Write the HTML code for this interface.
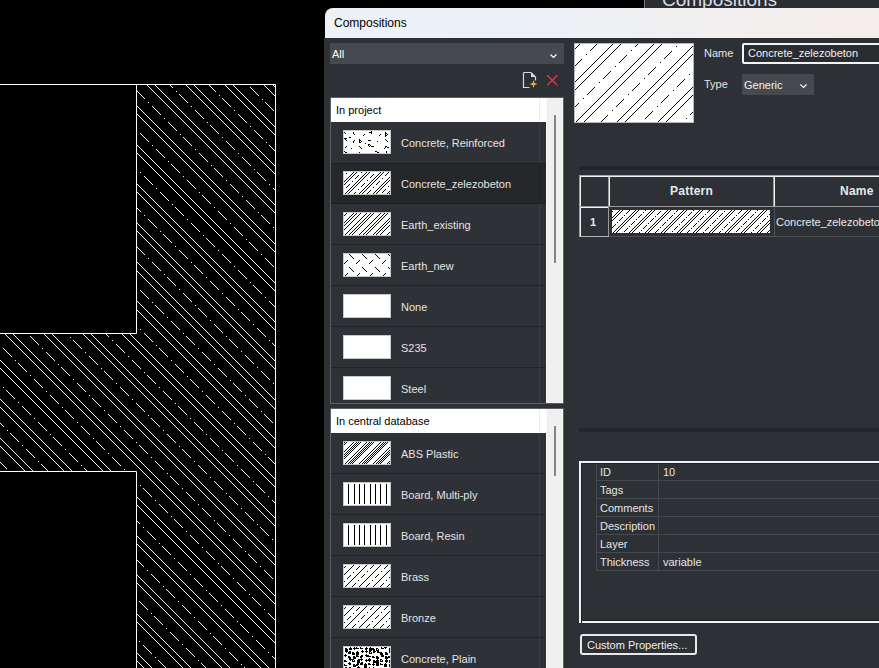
<!DOCTYPE html>
<html><head><meta charset="utf-8"><style>
*{box-sizing:border-box;margin:0;padding:0}
html,body{width:879px;height:668px;overflow:hidden;background:#000;font-family:"Liberation Sans",sans-serif;position:relative}
.a{position:absolute}
.t{line-height:1;white-space:nowrap}
svg{display:block}
</style></head><body>
<svg class="a" style="left:0;top:0" width="879" height="668">
<defs><clipPath id="cadclip"><path d="M137 85H275V668H137V471H0V334H137Z"/></clipPath></defs>
<g clip-path="url(#cadclip)" stroke="#fff" stroke-width="1" fill="none"><path d="M0 642L26 668M0 634L34 668M0 603L65 668M0 594L74 668M0 564L104 668M0 555L113 668M0 524L144 668M0 516L152 668M0 485L183 668M0 477L191 668M0 446L222 668M0 438L230 668M0 407L261 668M0 399L269 668M0 368L276 644M0 360L276 636M0 329L276 605M0 321L276 597M0 290L276 566M0 282L276 558M0 251L276 527M0 243L276 519M0 212L276 488M0 204L276 480M0 173L276 449M0 164L276 440M0 134L276 410M0 125L276 401M0 94L276 370M0 86L276 362M29 84L276 331M37 84L276 323M68 84L276 292M76 84L276 284M107 84L276 253M115 84L276 245M146 84L276 214M154 84L276 206M185 84L276 175M193 84L276 167M224 84L276 136M232 84L276 128M263 84L276 97M272 84L276 88M-14 644l9 9M-2 656l1 1M2 660l9 9M14 672l1 1M17 675l9 9M29 687l1 1M-18 601l9 9M-6 613l1 1M-2 617l9 9M10 629l1 1M14 633l9 9M26 645l1 1M29 648l9 9M41 660l1 1M45 664l9 9M57 676l1 1M60 679l9 9M72 691l1 1M-6 574l9 9M6 586l1 1M10 590l9 9M22 602l1 1M26 606l9 9M38 618l1 1M41 621l9 9M53 633l1 1M57 637l9 9M69 649l1 1M72 652l9 9M84 664l1 1M88 668l9 9M100 680l1 1M-10 531l9 9M2 543l1 1M6 547l9 9M18 559l1 1M22 563l9 9M34 575l1 1M37 578l9 9M49 590l1 1M53 594l9 9M65 606l1 1M68 609l9 9M80 621l1 1M84 625l9 9M96 637l1 1M100 641l9 9M112 653l1 1M115 656l9 9M127 668l1 1M131 672l9 9M143 684l1 1M-13 489l9 9M-1 501l1 1M2 504l9 9M14 516l1 1M18 520l9 9M30 532l1 1M33 535l9 9M45 547l1 1M49 551l9 9M61 563l1 1M65 567l9 9M77 579l1 1M80 582l9 9M92 594l1 1M96 598l9 9M108 610l1 1M111 613l9 9M123 625l1 1M127 629l9 9M139 641l1 1M143 645l9 9M155 657l1 1M158 660l9 9M170 672l1 1M174 676l9 9M186 688l1 1M-17 445l9 9M-5 457l1 1M-2 460l9 9M10 472l1 1M14 476l9 9M26 488l1 1M30 492l9 9M42 504l1 1M45 507l9 9M57 519l1 1M61 523l9 9M73 535l1 1M76 538l9 9M88 550l1 1M92 554l9 9M104 566l1 1M108 570l9 9M120 582l1 1M123 585l9 9M135 597l1 1M139 601l9 9M151 613l1 1M154 616l9 9M166 628l1 1M170 632l9 9M182 644l1 1M186 648l9 9M198 660l1 1M201 663l9 9M213 675l1 1M217 679l9 9M229 691l1 1M-5 418l9 9M7 430l1 1M10 433l9 9M22 445l1 1M26 449l9 9M38 461l1 1M41 464l9 9M53 476l1 1M57 480l9 9M69 492l1 1M73 496l9 9M85 508l1 1M88 511l9 9M100 523l1 1M104 527l9 9M116 539l1 1M120 543l9 9M132 555l1 1M135 558l9 9M147 570l1 1M151 574l9 9M163 586l1 1M166 589l9 9M178 601l1 1M182 605l9 9M194 617l1 1M198 621l9 9M210 633l1 1M213 636l9 9M225 648l1 1M229 652l9 9M241 664l1 1M244 667l9 9M256 679l1 1M-9 375l9 9M3 387l1 1M6 390l9 9M18 402l1 1M22 406l9 9M34 418l1 1M38 422l9 9M50 434l1 1M53 437l9 9M65 449l1 1M69 453l9 9M81 465l1 1M84 468l9 9M96 480l1 1M100 484l9 9M112 496l1 1M116 500l9 9M128 512l1 1M131 515l9 9M143 527l1 1M147 531l9 9M159 543l1 1M162 546l9 9M174 558l1 1M178 562l9 9M190 574l1 1M194 578l9 9M206 590l1 1M209 593l9 9M221 605l1 1M225 609l9 9M237 621l1 1M240 624l9 9M252 636l1 1M256 640l9 9M268 652l1 1M272 656l9 9M284 668l1 1M287 671l9 9M299 683l1 1M-13 332l9 9M-1 344l1 1M3 348l9 9M15 360l1 1M18 363l9 9M30 375l1 1M34 379l9 9M46 391l1 1M50 395l9 9M62 407l1 1M65 410l9 9M77 422l1 1M81 426l9 9M93 438l1 1M96 441l9 9M108 453l1 1M112 457l9 9M124 469l1 1M128 473l9 9M140 485l1 1M143 488l9 9M155 500l1 1M159 504l9 9M171 516l1 1M174 519l9 9M186 531l1 1M190 535l9 9M202 547l1 1M206 551l9 9M218 563l1 1M221 566l9 9M233 578l1 1M237 582l9 9M249 594l1 1M252 597l9 9M264 609l1 1M268 613l9 9M280 625l1 1M284 629l9 9M296 641l1 1M-17 289l9 9M-5 301l1 1M-1 305l9 9M11 317l1 1M14 320l9 9M26 332l1 1M30 336l9 9M42 348l1 1M46 352l9 9M58 364l1 1M61 367l9 9M73 379l1 1M77 383l9 9M89 395l1 1M92 398l9 9M104 410l1 1M108 414l9 9M120 426l1 1M124 430l9 9M136 442l1 1M139 445l9 9M151 457l1 1M155 461l9 9M167 473l1 1M170 476l9 9M182 488l1 1M186 492l9 9M198 504l1 1M202 508l9 9M214 520l1 1M217 523l9 9M229 535l1 1M233 539l9 9M245 551l1 1M248 554l9 9M260 566l1 1M264 570l9 9M276 582l1 1M280 586l9 9M292 598l1 1M-20 247l9 9M-8 259l1 1M-5 262l9 9M7 274l1 1M11 278l9 9M23 290l1 1M26 293l9 9M38 305l1 1M42 309l9 9M54 321l1 1M58 325l9 9M70 337l1 1M73 340l9 9M85 352l1 1M89 356l9 9M101 368l1 1M104 371l9 9M116 383l1 1M120 387l9 9M132 399l1 1M136 403l9 9M148 415l1 1M151 418l9 9M163 430l1 1M167 434l9 9M179 446l1 1M182 449l9 9M194 461l1 1M198 465l9 9M210 477l1 1M214 481l9 9M226 493l1 1M229 496l9 9M241 508l1 1M245 512l9 9M257 524l1 1M260 527l9 9M272 539l1 1M276 543l9 9M288 555l1 1M-9 219l9 9M3 231l1 1M7 235l9 9M19 247l1 1M22 250l9 9M34 262l1 1M38 266l9 9M50 278l1 1M54 282l9 9M66 294l1 1M69 297l9 9M81 309l1 1M85 313l9 9M97 325l1 1M100 328l9 9M112 340l1 1M116 344l9 9M128 356l1 1M132 360l9 9M144 372l1 1M147 375l9 9M159 387l1 1M163 391l9 9M175 403l1 1M178 406l9 9M190 418l1 1M194 422l9 9M206 434l1 1M210 438l9 9M222 450l1 1M225 453l9 9M237 465l1 1M241 469l9 9M253 481l1 1M256 484l9 9M268 496l1 1M272 500l9 9M284 512l1 1M288 516l9 9M300 528l1 1M-12 177l9 9M0 189l1 1M3 192l9 9M15 204l1 1M19 208l9 9M31 220l1 1M34 223l9 9M46 235l1 1M50 239l9 9M62 251l1 1M66 255l9 9M78 267l1 1M81 270l9 9M93 282l1 1M97 286l9 9M109 298l1 1M112 301l9 9M124 313l1 1M128 317l9 9M140 329l1 1M144 333l9 9M156 345l1 1M159 348l9 9M171 360l1 1M175 364l9 9M187 376l1 1M190 379l9 9M202 391l1 1M206 395l9 9M218 407l1 1M222 411l9 9M234 423l1 1M237 426l9 9M249 438l1 1M253 442l9 9M265 454l1 1M268 457l9 9M280 469l1 1M284 473l9 9M296 485l1 1M-16 134l9 9M-4 146l1 1M-1 149l9 9M11 161l1 1M15 165l9 9M27 177l1 1M30 180l9 9M42 192l1 1M46 196l9 9M58 208l1 1M62 212l9 9M74 224l1 1M77 227l9 9M89 239l1 1M93 243l9 9M105 255l1 1M108 258l9 9M120 270l1 1M124 274l9 9M136 286l1 1M140 290l9 9M152 302l1 1M155 305l9 9M167 317l1 1M171 321l9 9M183 333l1 1M186 336l9 9M198 348l1 1M202 352l9 9M214 364l1 1M218 368l9 9M230 380l1 1M233 383l9 9M245 395l1 1M249 399l9 9M261 411l1 1M264 414l9 9M276 426l1 1M280 430l9 9M292 442l1 1M-20 90l9 9M-8 102l1 1M-4 106l9 9M8 118l1 1M11 121l9 9M23 133l1 1M27 137l9 9M39 149l1 1M42 152l9 9M54 164l1 1M58 168l9 9M70 180l1 1M74 184l9 9M86 196l1 1M89 199l9 9M101 211l1 1M105 215l9 9M117 227l1 1M120 230l9 9M132 242l1 1M136 246l9 9M148 258l1 1M152 262l9 9M164 274l1 1M167 277l9 9M179 289l1 1M183 293l9 9M195 305l1 1M198 308l9 9M210 320l1 1M214 324l9 9M226 336l1 1M229 339l9 9M241 351l1 1M245 355l9 9M257 367l1 1M261 371l9 9M273 383l1 1M276 386l9 9M288 398l1 1M-8 63l9 9M4 75l1 1M7 78l9 9M19 90l1 1M23 94l9 9M35 106l1 1M38 109l9 9M50 121l1 1M54 125l9 9M66 137l1 1M70 141l9 9M82 153l1 1M85 156l9 9M97 168l1 1M101 172l9 9M113 184l1 1M116 187l9 9M128 199l1 1M132 203l9 9M144 215l1 1M148 219l9 9M160 231l1 1M163 234l9 9M175 246l1 1M179 250l9 9M191 262l1 1M194 265l9 9M206 277l1 1M210 281l9 9M222 293l1 1M226 297l9 9M238 309l1 1M241 312l9 9M253 324l1 1M257 328l9 9M269 340l1 1M272 343l9 9M284 355l1 1M288 359l9 9M300 371l1 1M35 67l9 9M47 79l1 1M50 82l9 9M62 94l1 1M66 98l9 9M78 110l1 1M82 114l9 9M94 126l1 1M97 129l9 9M109 141l1 1M113 145l9 9M125 157l1 1M128 160l9 9M140 172l1 1M144 176l9 9M156 188l1 1M160 192l9 9M172 204l1 1M175 207l9 9M187 219l1 1M191 223l9 9M203 235l1 1M206 238l9 9M218 250l1 1M222 254l9 9M234 266l1 1M238 270l9 9M250 282l1 1M253 285l9 9M265 297l1 1M269 301l9 9M281 313l1 1M284 316l9 9M296 328l1 1M78 71l9 9M90 83l1 1M93 86l9 9M105 98l1 1M109 102l9 9M121 114l1 1M124 117l9 9M136 129l1 1M140 133l9 9M152 145l1 1M156 149l9 9M168 161l1 1M171 164l9 9M183 176l1 1M187 180l9 9M199 192l1 1M202 195l9 9M214 207l1 1M218 211l9 9M230 223l1 1M234 227l9 9M246 239l1 1M249 242l9 9M261 254l1 1M265 258l9 9M277 270l1 1M280 273l9 9M292 285l1 1M121 75l9 9M133 87l1 1M136 90l9 9M148 102l1 1M152 106l9 9M164 118l1 1M168 122l9 9M180 134l1 1M183 137l9 9M195 149l1 1M199 153l9 9M211 165l1 1M214 168l9 9M226 180l1 1M230 184l9 9M242 196l1 1M246 200l9 9M258 212l1 1M261 215l9 9M273 227l1 1M277 231l9 9M289 243l1 1M148 63l9 9M160 75l1 1M164 79l9 9M176 91l1 1M179 94l9 9M191 106l1 1M195 110l9 9M207 122l1 1M210 125l9 9M222 137l1 1M226 141l9 9M238 153l1 1M242 157l9 9M254 169l1 1M257 172l9 9M269 184l1 1M273 188l9 9M285 200l1 1M288 203l9 9M300 215l1 1M191 67l9 9M203 79l1 1M207 83l9 9M219 95l1 1M222 98l9 9M234 110l1 1M238 114l9 9M250 126l1 1M254 130l9 9M266 142l1 1M269 145l9 9M281 157l1 1M285 161l9 9M297 173l1 1M234 71l9 9M246 83l1 1M250 87l9 9M262 99l1 1M265 102l9 9M277 114l1 1M281 118l9 9M293 130l1 1M262 60l9 9M274 72l1 1M277 75l9 9M289 87l1 1"/></g>
<path d="M0 84.5H275.5V668M136.5 84V333.5H0M0 471.5H136.5V668" stroke="#fff" stroke-width="1" fill="none"/>
</svg><div class="a" style="left:644px;top:0;width:235px;height:8px;background:#2a2d31;border-left:1px solid #77797c;overflow:hidden"><div class="a t" style="left:17px;top:-10.1px;font-size:19px;color:#d8dde3">Compositions</div></div><div class="a" style="left:325px;top:8px;width:570px;height:680px;background:#2d3035;border-top-left-radius:8px;overflow:hidden"><div class="a" style="left:0;top:0;width:570px;height:30px;background:linear-gradient(90deg,#eef2f7 0%,#ebf1f8 30%,#f1f0f1 62%,#f4eeeb 100%)"></div></div><div class="a t" style="left:334px;top:16.84px;font-size:12px;color:#000;font-weight:normal;">Compositions</div><div class="a" style="left:324px;top:38px;width:1px;height:630px;background:#2f3032"></div><div class="a" style="left:330px;top:43px;width:234px;height:21px;background:#46494e"></div><div class="a t" style="left:332px;top:48.69px;font-size:11px;color:#ffffff;font-weight:normal;">All</div><svg class="a" style="left:548px;top:52px" width="12" height="8"><path d="M2.5 2.5L5.5 5.5L8.5 2.5" stroke="#fff" stroke-width="1.15" fill="none"/></svg><svg class="a" style="left:520px;top:70px" width="20" height="20"><path d="M3.5 2.5H11L15.5 7V10.5M3.5 2.5V17.5H9.5" stroke="#d6dae2" stroke-width="1.2" fill="none"/><path d="M11 2.5V7H15.5Z" fill="#d6dae2"/><path d="M13.5 10L14.5 13L17.5 14L14.5 15L13.5 18L12.5 15L9.5 14L12.5 13Z" fill="#f0b030"/></svg><svg class="a" style="left:544px;top:72px" width="16" height="16"><path d="M3.2 3.2L13.4 13.4M13.4 3.2L3.2 13.4" stroke="#e5404e" stroke-width="1.3" fill="none"/></svg><div class="a" style="left:330px;top:97px;width:234px;height:307px;border:1px solid #5c5f63;background:#2e3136;overflow:hidden"><div class="a" style="left:0;top:0;width:216px;height:24px;background:#fff"></div><div class="a" style="left:208px;top:0;width:1px;height:24px;background:#ececec"></div><div class="a t" style="left:5px;top:7px;font-size:11px;color:#000">In project</div><div class="a" style="left:0;top:24px;width:215px;height:40px;background:#2e3136"></div><div class="a" style="left:0;top:64px;width:215px;height:1px;background:#222428"></div><div class="a" style="left:208px;top:24px;width:1px;height:40px;background:#34404b"></div><svg class="a" style="left:12px;top:32px" width="48" height="24"><rect x="0.5" y="0.5" width="47" height="23" fill="#fff" stroke="#c8c8c8"/><path d="M28 1h1v1h-1zM1 2h1v1h-1zM10 2h1v1h-1zM26 2h3v1h-3zM42 2h1v1h-1zM2 3h1v1h-1zM10 3h1v1h-1zM28 3h1v1h-1zM42 3h2v1h-2zM11 4h1v1h-1zM21 4h1v1h-1zM37 4h1v1h-1zM42 4h1v1h-1zM44 4h1v1h-1zM20 5h1v1h-1zM36 5h1v1h-1zM42 5h2v1h-2zM42 6h1v1h-1zM6 7h2v1h-2zM1 8h3v1h-3zM2 9h1v1h-1zM16 9h1v1h-1zM42 9h1v1h-1zM3 10h1v1h-1zM11 10h1v1h-1zM16 10h2v1h-2zM25 10h3v1h-3zM43 10h1v1h-1zM10 11h1v1h-1zM16 11h1v1h-1zM18 11h1v1h-1zM34 11h1v1h-1zM44 11h1v1h-1zM10 12h1v1h-1zM16 12h2v1h-2zM22 13h1v1h-1zM25 14h2v1h-2zM25 15h1v1h-1zM27 15h1v1h-1zM3 16h1v1h-1zM16 16h1v1h-1zM26 16h1v1h-1zM28 16h3v1h-3zM42 16h2v1h-2zM2 17h1v1h-1zM17 17h1v1h-1zM42 17h1v1h-1zM44 17h2v1h-2zM8 18h1v1h-1zM18 18h1v1h-1zM41 18h1v1h-1zM1 21h1v1h-1zM32 21h2v1h-2zM43 21h1v1h-1zM2 22h2v1h-2zM16 22h1v1h-1zM34 22h2v1h-2zM43 22h1v1h-1z" fill="#000"/></svg><div class="a t" style="left:70px;top:39.69px;font-size:11px;color:#e4e4e4">Concrete, Reinforced</div><div class="a" style="left:0;top:65px;width:215px;height:40px;background:#25272b"></div><div class="a" style="left:0;top:105px;width:215px;height:1px;background:#222428"></div><div class="a" style="left:0;top:64px;width:215px;height:1px;background:#2e3136"></div><div class="a" style="left:0;top:65px;width:215px;height:1px;background:#1d1f22"></div><div class="a" style="left:0;top:105px;width:215px;height:1px;background:#1d1f22"></div><div class="a" style="left:208px;top:65px;width:1px;height:40px;background:#1c232b"></div><svg class="a" style="left:12px;top:73px" width="48" height="24"><rect x="0.5" y="0.5" width="47" height="23" fill="#fff" stroke="#c8c8c8"/><path d="M10 1h1v1h-1zM13 1h1v1h-1zM18 1h1v1h-1zM23 1h1v1h-1zM26 1h1v1h-1zM37 1h1v1h-1zM40 1h1v1h-1zM45 1h1v1h-1zM3 2h1v1h-1zM9 2h1v1h-1zM12 2h1v1h-1zM22 2h1v1h-1zM25 2h1v1h-1zM36 2h1v1h-1zM39 2h1v1h-1zM44 2h1v1h-1zM8 3h1v1h-1zM11 3h1v1h-1zM21 3h1v1h-1zM24 3h1v1h-1zM30 3h1v1h-1zM35 3h1v1h-1zM38 3h1v1h-1zM43 3h1v1h-1zM7 4h1v1h-1zM10 4h1v1h-1zM15 4h1v1h-1zM20 4h1v1h-1zM23 4h1v1h-1zM29 4h1v1h-1zM34 4h1v1h-1zM37 4h1v1h-1zM42 4h1v1h-1zM6 5h1v1h-1zM9 5h1v1h-1zM14 5h1v1h-1zM19 5h1v1h-1zM22 5h1v1h-1zM28 5h1v1h-1zM33 5h1v1h-1zM36 5h1v1h-1zM5 6h1v1h-1zM8 6h1v1h-1zM13 6h1v1h-1zM18 6h1v1h-1zM21 6h1v1h-1zM27 6h1v1h-1zM32 6h1v1h-1zM35 6h1v1h-1zM46 6h1v1h-1zM4 7h1v1h-1zM7 7h1v1h-1zM12 7h1v1h-1zM17 7h1v1h-1zM20 7h1v1h-1zM31 7h1v1h-1zM34 7h1v1h-1zM39 7h1v1h-1zM45 7h1v1h-1zM3 8h1v1h-1zM6 8h1v1h-1zM16 8h1v1h-1zM19 8h1v1h-1zM30 8h1v1h-1zM33 8h1v1h-1zM44 8h1v1h-1zM2 9h1v1h-1zM5 9h1v1h-1zM15 9h1v1h-1zM18 9h1v1h-1zM24 9h1v1h-1zM29 9h1v1h-1zM32 9h1v1h-1zM43 9h1v1h-1zM46 9h1v1h-1zM1 10h1v1h-1zM4 10h1v1h-1zM9 10h1v1h-1zM14 10h1v1h-1zM17 10h1v1h-1zM28 10h1v1h-1zM31 10h1v1h-1zM36 10h1v1h-1zM42 10h1v1h-1zM45 10h1v1h-1zM3 11h1v1h-1zM13 11h1v1h-1zM16 11h1v1h-1zM27 11h1v1h-1zM30 11h1v1h-1zM35 11h1v1h-1zM41 11h1v1h-1zM44 11h1v1h-1zM2 12h1v1h-1zM12 12h1v1h-1zM15 12h1v1h-1zM21 12h1v1h-1zM26 12h1v1h-1zM29 12h1v1h-1zM34 12h1v1h-1zM40 12h1v1h-1zM43 12h1v1h-1zM1 13h1v1h-1zM6 13h1v1h-1zM11 13h1v1h-1zM14 13h1v1h-1zM20 13h1v1h-1zM25 13h1v1h-1zM28 13h1v1h-1zM33 13h1v1h-1zM39 13h1v1h-1zM42 13h1v1h-1zM5 14h1v1h-1zM10 14h1v1h-1zM13 14h1v1h-1zM19 14h1v1h-1zM24 14h1v1h-1zM27 14h1v1h-1zM38 14h1v1h-1zM41 14h1v1h-1zM4 15h1v1h-1zM9 15h1v1h-1zM12 15h1v1h-1zM18 15h1v1h-1zM23 15h1v1h-1zM26 15h1v1h-1zM37 15h1v1h-1zM40 15h1v1h-1zM45 15h1v1h-1zM3 16h1v1h-1zM8 16h1v1h-1zM11 16h1v1h-1zM22 16h1v1h-1zM25 16h1v1h-1zM30 16h1v1h-1zM36 16h1v1h-1zM39 16h1v1h-1zM7 17h1v1h-1zM10 17h1v1h-1zM21 17h1v1h-1zM24 17h1v1h-1zM35 17h1v1h-1zM38 17h1v1h-1zM6 18h1v1h-1zM9 18h1v1h-1zM15 18h1v1h-1zM20 18h1v1h-1zM23 18h1v1h-1zM34 18h1v1h-1zM37 18h1v1h-1zM42 18h1v1h-1zM5 19h1v1h-1zM8 19h1v1h-1zM19 19h1v1h-1zM22 19h1v1h-1zM27 19h1v1h-1zM33 19h1v1h-1zM36 19h1v1h-1zM41 19h1v1h-1zM4 20h1v1h-1zM7 20h1v1h-1zM18 20h1v1h-1zM21 20h1v1h-1zM26 20h1v1h-1zM32 20h1v1h-1zM35 20h1v1h-1zM40 20h1v1h-1zM46 20h1v1h-1zM3 21h1v1h-1zM6 21h1v1h-1zM12 21h1v1h-1zM17 21h1v1h-1zM20 21h1v1h-1zM25 21h1v1h-1zM31 21h1v1h-1zM34 21h1v1h-1zM39 21h1v1h-1zM45 21h1v1h-1zM2 22h1v1h-1zM5 22h1v1h-1zM11 22h1v1h-1zM16 22h1v1h-1zM19 22h1v1h-1zM24 22h1v1h-1zM30 22h1v1h-1zM33 22h1v1h-1zM44 22h1v1h-1zM46 22h1v1h-1z" fill="#000"/></svg><div class="a t" style="left:70px;top:80.69px;font-size:11px;color:#e4e4e4">Concrete_zelezobeton</div><div class="a" style="left:0;top:106px;width:215px;height:40px;background:#2e3136"></div><div class="a" style="left:0;top:146px;width:215px;height:1px;background:#222428"></div><div class="a" style="left:208px;top:106px;width:1px;height:40px;background:#34404b"></div><svg class="a" style="left:12px;top:114px" width="48" height="24"><rect x="0.5" y="0.5" width="47" height="23" fill="#fff" stroke="#c8c8c8"/><path d="M3 1h1v1h-1zM10 1h1v1h-1zM13 1h1v1h-1zM17 1h1v1h-1zM23 1h1v1h-1zM27 1h1v1h-1zM30 1h1v1h-1zM37 1h1v1h-1zM41 1h1v1h-1zM44 1h1v1h-1zM2 2h1v1h-1zM9 2h1v1h-1zM12 2h1v1h-1zM16 2h1v1h-1zM22 2h1v1h-1zM26 2h1v1h-1zM29 2h1v1h-1zM36 2h1v1h-1zM40 2h1v1h-1zM43 2h1v1h-1zM1 3h1v1h-1zM8 3h1v1h-1zM11 3h1v1h-1zM15 3h1v1h-1zM21 3h1v1h-1zM25 3h1v1h-1zM28 3h1v1h-1zM35 3h1v1h-1zM39 3h1v1h-1zM42 3h1v1h-1zM7 4h1v1h-1zM10 4h1v1h-1zM14 4h1v1h-1zM20 4h1v1h-1zM24 4h1v1h-1zM27 4h1v1h-1zM34 4h1v1h-1zM38 4h1v1h-1zM41 4h1v1h-1zM6 5h1v1h-1zM9 5h1v1h-1zM13 5h1v1h-1zM19 5h1v1h-1zM23 5h1v1h-1zM26 5h1v1h-1zM33 5h1v1h-1zM37 5h1v1h-1zM40 5h1v1h-1zM5 6h1v1h-1zM8 6h1v1h-1zM12 6h1v1h-1zM18 6h1v1h-1zM22 6h1v1h-1zM25 6h1v1h-1zM32 6h1v1h-1zM36 6h1v1h-1zM39 6h1v1h-1zM46 6h1v1h-1zM4 7h1v1h-1zM7 7h1v1h-1zM11 7h1v1h-1zM17 7h1v1h-1zM21 7h1v1h-1zM24 7h1v1h-1zM31 7h1v1h-1zM35 7h1v1h-1zM38 7h1v1h-1zM45 7h1v1h-1zM3 8h1v1h-1zM6 8h1v1h-1zM10 8h1v1h-1zM16 8h1v1h-1zM20 8h1v1h-1zM23 8h1v1h-1zM30 8h1v1h-1zM34 8h1v1h-1zM37 8h1v1h-1zM44 8h1v1h-1zM2 9h1v1h-1zM5 9h1v1h-1zM9 9h1v1h-1zM15 9h1v1h-1zM19 9h1v1h-1zM22 9h1v1h-1zM29 9h1v1h-1zM33 9h1v1h-1zM36 9h1v1h-1zM43 9h1v1h-1zM46 9h1v1h-1zM1 10h1v1h-1zM4 10h1v1h-1zM8 10h1v1h-1zM14 10h1v1h-1zM18 10h1v1h-1zM21 10h1v1h-1zM28 10h1v1h-1zM32 10h1v1h-1zM35 10h1v1h-1zM42 10h1v1h-1zM45 10h1v1h-1zM3 11h1v1h-1zM7 11h1v1h-1zM13 11h1v1h-1zM17 11h1v1h-1zM20 11h1v1h-1zM27 11h1v1h-1zM31 11h1v1h-1zM34 11h1v1h-1zM41 11h1v1h-1zM44 11h1v1h-1zM2 12h1v1h-1zM6 12h1v1h-1zM12 12h1v1h-1zM16 12h1v1h-1zM19 12h1v1h-1zM26 12h1v1h-1zM30 12h1v1h-1zM33 12h1v1h-1zM40 12h1v1h-1zM43 12h1v1h-1zM1 13h1v1h-1zM5 13h1v1h-1zM11 13h1v1h-1zM15 13h1v1h-1zM18 13h1v1h-1zM25 13h1v1h-1zM29 13h1v1h-1zM32 13h1v1h-1zM39 13h1v1h-1zM42 13h1v1h-1zM46 13h1v1h-1zM4 14h1v1h-1zM10 14h1v1h-1zM14 14h1v1h-1zM17 14h1v1h-1zM24 14h1v1h-1zM28 14h1v1h-1zM31 14h1v1h-1zM38 14h1v1h-1zM41 14h1v1h-1zM45 14h1v1h-1zM3 15h1v1h-1zM9 15h1v1h-1zM13 15h1v1h-1zM16 15h1v1h-1zM23 15h1v1h-1zM27 15h1v1h-1zM30 15h1v1h-1zM37 15h1v1h-1zM40 15h1v1h-1zM44 15h1v1h-1zM2 16h1v1h-1zM8 16h1v1h-1zM12 16h1v1h-1zM15 16h1v1h-1zM22 16h1v1h-1zM26 16h1v1h-1zM29 16h1v1h-1zM36 16h1v1h-1zM39 16h1v1h-1zM43 16h1v1h-1zM1 17h1v1h-1zM7 17h1v1h-1zM11 17h1v1h-1zM14 17h1v1h-1zM21 17h1v1h-1zM25 17h1v1h-1zM28 17h1v1h-1zM35 17h1v1h-1zM38 17h1v1h-1zM42 17h1v1h-1zM6 18h1v1h-1zM10 18h1v1h-1zM13 18h1v1h-1zM20 18h1v1h-1zM24 18h1v1h-1zM27 18h1v1h-1zM34 18h1v1h-1zM37 18h1v1h-1zM41 18h1v1h-1zM5 19h1v1h-1zM9 19h1v1h-1zM12 19h1v1h-1zM19 19h1v1h-1zM23 19h1v1h-1zM26 19h1v1h-1zM33 19h1v1h-1zM36 19h1v1h-1zM40 19h1v1h-1zM4 20h1v1h-1zM8 20h1v1h-1zM11 20h1v1h-1zM18 20h1v1h-1zM22 20h1v1h-1zM25 20h1v1h-1zM32 20h1v1h-1zM35 20h1v1h-1zM39 20h1v1h-1zM46 20h1v1h-1zM3 21h1v1h-1zM7 21h1v1h-1zM10 21h1v1h-1zM17 21h1v1h-1zM21 21h1v1h-1zM24 21h1v1h-1zM31 21h1v1h-1zM34 21h1v1h-1zM38 21h1v1h-1zM45 21h1v1h-1zM2 22h1v1h-1zM6 22h1v1h-1zM9 22h1v1h-1zM16 22h1v1h-1zM20 22h1v1h-1zM23 22h1v1h-1zM30 22h1v1h-1zM33 22h1v1h-1zM37 22h1v1h-1zM44 22h1v1h-1z" fill="#000"/></svg><div class="a t" style="left:70px;top:121.69px;font-size:11px;color:#e4e4e4">Earth_existing</div><div class="a" style="left:0;top:147px;width:215px;height:40px;background:#2e3136"></div><div class="a" style="left:0;top:187px;width:215px;height:1px;background:#222428"></div><div class="a" style="left:208px;top:147px;width:1px;height:40px;background:#34404b"></div><svg class="a" style="left:12px;top:155px" width="48" height="24"><rect x="0.5" y="0.5" width="47" height="23" fill="#fff" stroke="#c8c8c8"/><path d="M6 1h1v1h-1zM19 1h1v1h-1zM32 1h1v1h-1zM45 1h1v1h-1zM7 2h1v1h-1zM20 2h1v1h-1zM33 2h1v1h-1zM46 2h1v1h-1zM8 3h1v1h-1zM21 3h1v1h-1zM34 3h1v1h-1zM9 4h1v1h-1zM22 4h1v1h-1zM35 4h1v1h-1zM10 5h1v1h-1zM23 5h1v1h-1zM36 5h1v1h-1zM4 7h1v1h-1zM16 7h1v1h-1zM29 7h1v1h-1zM42 7h1v1h-1zM3 8h1v1h-1zM15 8h1v1h-1zM28 8h1v1h-1zM41 8h1v1h-1zM2 9h1v1h-1zM14 9h1v1h-1zM27 9h1v1h-1zM40 9h1v1h-1zM1 10h1v1h-1zM13 10h1v1h-1zM26 10h1v1h-1zM39 10h1v1h-1zM6 14h1v1h-1zM19 14h1v1h-1zM32 14h1v1h-1zM45 14h1v1h-1zM7 15h1v1h-1zM20 15h1v1h-1zM33 15h1v1h-1zM46 15h1v1h-1zM8 16h1v1h-1zM21 16h1v1h-1zM34 16h1v1h-1zM9 17h1v1h-1zM22 17h1v1h-1zM35 17h1v1h-1zM10 18h1v1h-1zM23 18h1v1h-1zM36 18h1v1h-1zM4 20h1v1h-1zM16 20h1v1h-1zM29 20h1v1h-1zM42 20h1v1h-1zM3 21h1v1h-1zM15 21h1v1h-1zM28 21h1v1h-1zM41 21h1v1h-1zM2 22h1v1h-1zM14 22h1v1h-1zM27 22h1v1h-1zM40 22h1v1h-1z" fill="#000"/></svg><div class="a t" style="left:70px;top:162.69px;font-size:11px;color:#e4e4e4">Earth_new</div><div class="a" style="left:0;top:188px;width:215px;height:40px;background:#2e3136"></div><div class="a" style="left:0;top:228px;width:215px;height:1px;background:#222428"></div><div class="a" style="left:208px;top:188px;width:1px;height:40px;background:#34404b"></div><svg class="a" style="left:12px;top:196px" width="48" height="24"><rect x="0.5" y="0.5" width="47" height="23" fill="#fff" stroke="#c8c8c8"/></svg><div class="a t" style="left:70px;top:203.69px;font-size:11px;color:#e4e4e4">None</div><div class="a" style="left:0;top:229px;width:215px;height:40px;background:#2e3136"></div><div class="a" style="left:0;top:269px;width:215px;height:1px;background:#222428"></div><div class="a" style="left:208px;top:229px;width:1px;height:40px;background:#34404b"></div><svg class="a" style="left:12px;top:237px" width="48" height="24"><rect x="0.5" y="0.5" width="47" height="23" fill="#fff" stroke="#c8c8c8"/></svg><div class="a t" style="left:70px;top:244.69px;font-size:11px;color:#e4e4e4">S235</div><div class="a" style="left:0;top:270px;width:215px;height:40px;background:#2e3136"></div><div class="a" style="left:0;top:310px;width:215px;height:1px;background:#222428"></div><div class="a" style="left:208px;top:270px;width:1px;height:40px;background:#34404b"></div><svg class="a" style="left:12px;top:278px" width="48" height="24"><rect x="0.5" y="0.5" width="47" height="23" fill="#fff" stroke="#c8c8c8"/></svg><div class="a t" style="left:70px;top:285.69px;font-size:11px;color:#e4e4e4">Steel</div><div class="a" style="left:215px;top:0;width:17px;height:307px;background:#f0f0f0;border-left:1px solid #fafafa;border-right:1px solid #f8f8f8"></div><div class="a" style="left:223px;top:17px;width:2px;height:148px;background:#858585"></div></div><div class="a" style="left:330px;top:408px;width:234px;height:293px;border:1px solid #5c5f63;background:#2e3136;overflow:hidden"><div class="a" style="left:0;top:0;width:216px;height:24px;background:#fff"></div><div class="a" style="left:208px;top:0;width:1px;height:24px;background:#ececec"></div><div class="a t" style="left:5px;top:7px;font-size:11px;color:#000">In central database</div><div class="a" style="left:0;top:24px;width:215px;height:40px;background:#2e3136"></div><div class="a" style="left:0;top:64px;width:215px;height:1px;background:#222428"></div><div class="a" style="left:208px;top:24px;width:1px;height:40px;background:#34404b"></div><svg class="a" style="left:12px;top:32px" width="48" height="24"><rect x="0.5" y="0.5" width="47" height="23" fill="#fff" stroke="#c8c8c8"/><path d="M1 1h1v1h-1zM3 1h1v1h-1zM10 1h1v1h-1zM13 1h1v1h-1zM15 1h1v1h-1zM17 1h1v1h-1zM23 1h1v1h-1zM26 1h1v1h-1zM28 1h1v1h-1zM30 1h1v1h-1zM37 1h1v1h-1zM40 1h1v1h-1zM42 1h1v1h-1zM44 1h1v1h-1zM2 2h1v1h-1zM9 2h1v1h-1zM12 2h1v1h-1zM14 2h1v1h-1zM16 2h1v1h-1zM22 2h1v1h-1zM25 2h1v1h-1zM27 2h1v1h-1zM29 2h1v1h-1zM36 2h1v1h-1zM39 2h1v1h-1zM41 2h1v1h-1zM43 2h1v1h-1zM1 3h1v1h-1zM8 3h1v1h-1zM11 3h1v1h-1zM13 3h1v1h-1zM15 3h1v1h-1zM21 3h1v1h-1zM24 3h1v1h-1zM26 3h1v1h-1zM28 3h1v1h-1zM35 3h1v1h-1zM38 3h1v1h-1zM40 3h1v1h-1zM42 3h1v1h-1zM7 4h1v1h-1zM10 4h1v1h-1zM12 4h1v1h-1zM14 4h1v1h-1zM20 4h1v1h-1zM23 4h1v1h-1zM25 4h1v1h-1zM27 4h1v1h-1zM34 4h1v1h-1zM37 4h1v1h-1zM39 4h1v1h-1zM41 4h1v1h-1zM6 5h1v1h-1zM9 5h1v1h-1zM11 5h1v1h-1zM13 5h1v1h-1zM19 5h1v1h-1zM22 5h1v1h-1zM24 5h1v1h-1zM26 5h1v1h-1zM33 5h1v1h-1zM36 5h1v1h-1zM38 5h1v1h-1zM40 5h1v1h-1zM5 6h1v1h-1zM8 6h1v1h-1zM10 6h1v1h-1zM12 6h1v1h-1zM18 6h1v1h-1zM21 6h1v1h-1zM23 6h1v1h-1zM25 6h1v1h-1zM32 6h1v1h-1zM35 6h1v1h-1zM37 6h1v1h-1zM39 6h1v1h-1zM46 6h1v1h-1zM4 7h1v1h-1zM7 7h1v1h-1zM9 7h1v1h-1zM11 7h1v1h-1zM17 7h1v1h-1zM20 7h1v1h-1zM22 7h1v1h-1zM24 7h1v1h-1zM31 7h1v1h-1zM34 7h1v1h-1zM36 7h1v1h-1zM38 7h1v1h-1zM45 7h1v1h-1zM3 8h1v1h-1zM6 8h1v1h-1zM8 8h1v1h-1zM10 8h1v1h-1zM16 8h1v1h-1zM19 8h1v1h-1zM21 8h1v1h-1zM23 8h1v1h-1zM30 8h1v1h-1zM33 8h1v1h-1zM35 8h1v1h-1zM37 8h1v1h-1zM44 8h1v1h-1zM2 9h1v1h-1zM5 9h1v1h-1zM7 9h1v1h-1zM9 9h1v1h-1zM15 9h1v1h-1zM18 9h1v1h-1zM20 9h1v1h-1zM22 9h1v1h-1zM29 9h1v1h-1zM32 9h1v1h-1zM34 9h1v1h-1zM36 9h1v1h-1zM43 9h1v1h-1zM46 9h1v1h-1zM1 10h1v1h-1zM4 10h1v1h-1zM6 10h1v1h-1zM8 10h1v1h-1zM14 10h1v1h-1zM17 10h1v1h-1zM19 10h1v1h-1zM21 10h1v1h-1zM28 10h1v1h-1zM31 10h1v1h-1zM33 10h1v1h-1zM35 10h1v1h-1zM42 10h1v1h-1zM45 10h1v1h-1zM3 11h1v1h-1zM5 11h1v1h-1zM7 11h1v1h-1zM13 11h1v1h-1zM16 11h1v1h-1zM18 11h1v1h-1zM20 11h1v1h-1zM27 11h1v1h-1zM30 11h1v1h-1zM32 11h1v1h-1zM34 11h1v1h-1zM41 11h1v1h-1zM44 11h1v1h-1zM46 11h1v1h-1zM2 12h1v1h-1zM4 12h1v1h-1zM6 12h1v1h-1zM12 12h1v1h-1zM15 12h1v1h-1zM17 12h1v1h-1zM19 12h1v1h-1zM26 12h1v1h-1zM29 12h1v1h-1zM31 12h1v1h-1zM33 12h1v1h-1zM40 12h1v1h-1zM43 12h1v1h-1zM45 12h1v1h-1zM1 13h1v1h-1zM3 13h1v1h-1zM5 13h1v1h-1zM11 13h1v1h-1zM14 13h1v1h-1zM16 13h1v1h-1zM18 13h1v1h-1zM25 13h1v1h-1zM28 13h1v1h-1zM30 13h1v1h-1zM32 13h1v1h-1zM39 13h1v1h-1zM42 13h1v1h-1zM44 13h1v1h-1zM46 13h1v1h-1zM2 14h1v1h-1zM4 14h1v1h-1zM10 14h1v1h-1zM13 14h1v1h-1zM15 14h1v1h-1zM17 14h1v1h-1zM24 14h1v1h-1zM27 14h1v1h-1zM29 14h1v1h-1zM31 14h1v1h-1zM38 14h1v1h-1zM41 14h1v1h-1zM43 14h1v1h-1zM45 14h1v1h-1zM1 15h1v1h-1zM3 15h1v1h-1zM9 15h1v1h-1zM12 15h1v1h-1zM14 15h1v1h-1zM16 15h1v1h-1zM23 15h1v1h-1zM26 15h1v1h-1zM28 15h1v1h-1zM30 15h1v1h-1zM37 15h1v1h-1zM40 15h1v1h-1zM42 15h1v1h-1zM44 15h1v1h-1zM2 16h1v1h-1zM8 16h1v1h-1zM11 16h1v1h-1zM13 16h1v1h-1zM15 16h1v1h-1zM22 16h1v1h-1zM25 16h1v1h-1zM27 16h1v1h-1zM29 16h1v1h-1zM36 16h1v1h-1zM39 16h1v1h-1zM41 16h1v1h-1zM43 16h1v1h-1zM1 17h1v1h-1zM7 17h1v1h-1zM10 17h1v1h-1zM12 17h1v1h-1zM14 17h1v1h-1zM21 17h1v1h-1zM24 17h1v1h-1zM26 17h1v1h-1zM28 17h1v1h-1zM35 17h1v1h-1zM38 17h1v1h-1zM40 17h1v1h-1zM42 17h1v1h-1zM6 18h1v1h-1zM9 18h1v1h-1zM11 18h1v1h-1zM13 18h1v1h-1zM20 18h1v1h-1zM23 18h1v1h-1zM25 18h1v1h-1zM27 18h1v1h-1zM34 18h1v1h-1zM37 18h1v1h-1zM39 18h1v1h-1zM41 18h1v1h-1zM5 19h1v1h-1zM8 19h1v1h-1zM10 19h1v1h-1zM12 19h1v1h-1zM19 19h1v1h-1zM22 19h1v1h-1zM24 19h1v1h-1zM26 19h1v1h-1zM33 19h1v1h-1zM36 19h1v1h-1zM38 19h1v1h-1zM40 19h1v1h-1zM4 20h1v1h-1zM7 20h1v1h-1zM9 20h1v1h-1zM11 20h1v1h-1zM18 20h1v1h-1zM21 20h1v1h-1zM23 20h1v1h-1zM25 20h1v1h-1zM32 20h1v1h-1zM35 20h1v1h-1zM37 20h1v1h-1zM39 20h1v1h-1zM46 20h1v1h-1zM3 21h1v1h-1zM6 21h1v1h-1zM8 21h1v1h-1zM10 21h1v1h-1zM17 21h1v1h-1zM20 21h1v1h-1zM22 21h1v1h-1zM24 21h1v1h-1zM31 21h1v1h-1zM34 21h1v1h-1zM36 21h1v1h-1zM38 21h1v1h-1zM45 21h1v1h-1zM2 22h1v1h-1zM5 22h1v1h-1zM7 22h1v1h-1zM9 22h1v1h-1zM16 22h1v1h-1zM19 22h1v1h-1zM21 22h1v1h-1zM23 22h1v1h-1zM30 22h1v1h-1zM33 22h1v1h-1zM35 22h1v1h-1zM37 22h1v1h-1zM44 22h1v1h-1zM46 22h1v1h-1z" fill="#000"/></svg><div class="a t" style="left:70px;top:39.69px;font-size:11px;color:#e4e4e4">ABS Plastic</div><div class="a" style="left:0;top:65px;width:215px;height:40px;background:#2e3136"></div><div class="a" style="left:0;top:105px;width:215px;height:1px;background:#222428"></div><div class="a" style="left:208px;top:65px;width:1px;height:40px;background:#34404b"></div><svg class="a" style="left:12px;top:73px" width="48" height="24"><rect x="0.5" y="0.5" width="47" height="23" fill="#fff" stroke="#c8c8c8"/><path d="M5 2h1v1h-1zM11 2h1v1h-1zM16 2h1v1h-1zM21 2h1v1h-1zM27 2h1v1h-1zM32 2h1v1h-1zM37 2h1v1h-1zM43 2h1v1h-1zM5 3h1v1h-1zM11 3h1v1h-1zM16 3h1v1h-1zM21 3h1v1h-1zM27 3h1v1h-1zM32 3h1v1h-1zM37 3h1v1h-1zM43 3h1v1h-1zM5 4h1v1h-1zM11 4h1v1h-1zM16 4h1v1h-1zM21 4h1v1h-1zM27 4h1v1h-1zM32 4h1v1h-1zM37 4h1v1h-1zM43 4h1v1h-1zM5 5h1v1h-1zM11 5h1v1h-1zM16 5h1v1h-1zM21 5h1v1h-1zM27 5h1v1h-1zM32 5h1v1h-1zM37 5h1v1h-1zM43 5h1v1h-1zM5 6h1v1h-1zM11 6h1v1h-1zM16 6h1v1h-1zM21 6h1v1h-1zM27 6h1v1h-1zM32 6h1v1h-1zM37 6h1v1h-1zM43 6h1v1h-1zM5 7h1v1h-1zM11 7h1v1h-1zM16 7h1v1h-1zM21 7h1v1h-1zM27 7h1v1h-1zM32 7h1v1h-1zM37 7h1v1h-1zM43 7h1v1h-1zM5 8h1v1h-1zM11 8h1v1h-1zM16 8h1v1h-1zM21 8h1v1h-1zM27 8h1v1h-1zM32 8h1v1h-1zM37 8h1v1h-1zM43 8h1v1h-1zM5 9h1v1h-1zM11 9h1v1h-1zM16 9h1v1h-1zM21 9h1v1h-1zM27 9h1v1h-1zM32 9h1v1h-1zM37 9h1v1h-1zM43 9h1v1h-1zM5 10h1v1h-1zM11 10h1v1h-1zM16 10h1v1h-1zM21 10h1v1h-1zM27 10h1v1h-1zM32 10h1v1h-1zM37 10h1v1h-1zM43 10h1v1h-1zM5 11h1v1h-1zM11 11h1v1h-1zM16 11h1v1h-1zM21 11h1v1h-1zM27 11h1v1h-1zM32 11h1v1h-1zM37 11h1v1h-1zM43 11h1v1h-1zM5 12h1v1h-1zM11 12h1v1h-1zM16 12h1v1h-1zM21 12h1v1h-1zM27 12h1v1h-1zM32 12h1v1h-1zM37 12h1v1h-1zM43 12h1v1h-1zM5 13h1v1h-1zM11 13h1v1h-1zM16 13h1v1h-1zM21 13h1v1h-1zM27 13h1v1h-1zM32 13h1v1h-1zM37 13h1v1h-1zM43 13h1v1h-1zM5 14h1v1h-1zM11 14h1v1h-1zM16 14h1v1h-1zM21 14h1v1h-1zM27 14h1v1h-1zM32 14h1v1h-1zM37 14h1v1h-1zM43 14h1v1h-1zM5 15h1v1h-1zM11 15h1v1h-1zM16 15h1v1h-1zM21 15h1v1h-1zM27 15h1v1h-1zM32 15h1v1h-1zM37 15h1v1h-1zM43 15h1v1h-1zM5 16h1v1h-1zM11 16h1v1h-1zM16 16h1v1h-1zM21 16h1v1h-1zM27 16h1v1h-1zM32 16h1v1h-1zM37 16h1v1h-1zM43 16h1v1h-1zM5 17h1v1h-1zM11 17h1v1h-1zM16 17h1v1h-1zM21 17h1v1h-1zM27 17h1v1h-1zM32 17h1v1h-1zM37 17h1v1h-1zM43 17h1v1h-1zM5 18h1v1h-1zM11 18h1v1h-1zM16 18h1v1h-1zM21 18h1v1h-1zM27 18h1v1h-1zM32 18h1v1h-1zM37 18h1v1h-1zM43 18h1v1h-1zM5 19h1v1h-1zM11 19h1v1h-1zM16 19h1v1h-1zM21 19h1v1h-1zM27 19h1v1h-1zM32 19h1v1h-1zM37 19h1v1h-1zM43 19h1v1h-1zM5 20h1v1h-1zM11 20h1v1h-1zM16 20h1v1h-1zM21 20h1v1h-1zM27 20h1v1h-1zM32 20h1v1h-1zM37 20h1v1h-1zM43 20h1v1h-1zM5 21h1v1h-1zM11 21h1v1h-1zM16 21h1v1h-1zM21 21h1v1h-1zM27 21h1v1h-1zM32 21h1v1h-1zM37 21h1v1h-1zM43 21h1v1h-1z" fill="#000"/></svg><div class="a t" style="left:70px;top:80.69px;font-size:11px;color:#e4e4e4">Board, Multi-ply</div><div class="a" style="left:0;top:106px;width:215px;height:40px;background:#2e3136"></div><div class="a" style="left:0;top:146px;width:215px;height:1px;background:#222428"></div><div class="a" style="left:208px;top:106px;width:1px;height:40px;background:#34404b"></div><svg class="a" style="left:12px;top:114px" width="48" height="24"><rect x="0.5" y="0.5" width="47" height="23" fill="#fff" stroke="#c8c8c8"/><path d="M5 2h1v1h-1zM11 2h1v1h-1zM16 2h1v1h-1zM21 2h1v1h-1zM27 2h1v1h-1zM32 2h1v1h-1zM37 2h1v1h-1zM43 2h1v1h-1zM5 3h1v1h-1zM11 3h1v1h-1zM16 3h1v1h-1zM21 3h1v1h-1zM27 3h1v1h-1zM32 3h1v1h-1zM37 3h1v1h-1zM43 3h1v1h-1zM5 4h1v1h-1zM11 4h1v1h-1zM16 4h1v1h-1zM21 4h1v1h-1zM27 4h1v1h-1zM32 4h1v1h-1zM37 4h1v1h-1zM43 4h1v1h-1zM5 5h1v1h-1zM11 5h1v1h-1zM16 5h1v1h-1zM21 5h1v1h-1zM27 5h1v1h-1zM32 5h1v1h-1zM37 5h1v1h-1zM43 5h1v1h-1zM5 6h1v1h-1zM11 6h1v1h-1zM16 6h1v1h-1zM21 6h1v1h-1zM27 6h1v1h-1zM32 6h1v1h-1zM37 6h1v1h-1zM43 6h1v1h-1zM5 7h1v1h-1zM11 7h1v1h-1zM16 7h1v1h-1zM21 7h1v1h-1zM27 7h1v1h-1zM32 7h1v1h-1zM37 7h1v1h-1zM43 7h1v1h-1zM5 8h1v1h-1zM11 8h1v1h-1zM16 8h1v1h-1zM21 8h1v1h-1zM27 8h1v1h-1zM32 8h1v1h-1zM37 8h1v1h-1zM43 8h1v1h-1zM5 9h1v1h-1zM11 9h1v1h-1zM16 9h1v1h-1zM21 9h1v1h-1zM27 9h1v1h-1zM32 9h1v1h-1zM37 9h1v1h-1zM43 9h1v1h-1zM5 10h1v1h-1zM11 10h1v1h-1zM16 10h1v1h-1zM21 10h1v1h-1zM27 10h1v1h-1zM32 10h1v1h-1zM37 10h1v1h-1zM43 10h1v1h-1zM5 11h1v1h-1zM11 11h1v1h-1zM16 11h1v1h-1zM21 11h1v1h-1zM27 11h1v1h-1zM32 11h1v1h-1zM37 11h1v1h-1zM43 11h1v1h-1zM5 12h1v1h-1zM11 12h1v1h-1zM16 12h1v1h-1zM21 12h1v1h-1zM27 12h1v1h-1zM32 12h1v1h-1zM37 12h1v1h-1zM43 12h1v1h-1zM5 13h1v1h-1zM11 13h1v1h-1zM16 13h1v1h-1zM21 13h1v1h-1zM27 13h1v1h-1zM32 13h1v1h-1zM37 13h1v1h-1zM43 13h1v1h-1zM5 14h1v1h-1zM11 14h1v1h-1zM16 14h1v1h-1zM21 14h1v1h-1zM27 14h1v1h-1zM32 14h1v1h-1zM37 14h1v1h-1zM43 14h1v1h-1zM5 15h1v1h-1zM11 15h1v1h-1zM16 15h1v1h-1zM21 15h1v1h-1zM27 15h1v1h-1zM32 15h1v1h-1zM37 15h1v1h-1zM43 15h1v1h-1zM5 16h1v1h-1zM11 16h1v1h-1zM16 16h1v1h-1zM21 16h1v1h-1zM27 16h1v1h-1zM32 16h1v1h-1zM37 16h1v1h-1zM43 16h1v1h-1zM5 17h1v1h-1zM11 17h1v1h-1zM16 17h1v1h-1zM21 17h1v1h-1zM27 17h1v1h-1zM32 17h1v1h-1zM37 17h1v1h-1zM43 17h1v1h-1zM5 18h1v1h-1zM11 18h1v1h-1zM16 18h1v1h-1zM21 18h1v1h-1zM27 18h1v1h-1zM32 18h1v1h-1zM37 18h1v1h-1zM43 18h1v1h-1zM5 19h1v1h-1zM11 19h1v1h-1zM16 19h1v1h-1zM21 19h1v1h-1zM27 19h1v1h-1zM32 19h1v1h-1zM37 19h1v1h-1zM43 19h1v1h-1zM5 20h1v1h-1zM11 20h1v1h-1zM16 20h1v1h-1zM21 20h1v1h-1zM27 20h1v1h-1zM32 20h1v1h-1zM37 20h1v1h-1zM43 20h1v1h-1zM5 21h1v1h-1zM11 21h1v1h-1zM16 21h1v1h-1zM21 21h1v1h-1zM27 21h1v1h-1zM32 21h1v1h-1zM37 21h1v1h-1zM43 21h1v1h-1z" fill="#000"/></svg><div class="a t" style="left:70px;top:121.69px;font-size:11px;color:#e4e4e4">Board, Resin</div><div class="a" style="left:0;top:147px;width:215px;height:40px;background:#2e3136"></div><div class="a" style="left:0;top:187px;width:215px;height:1px;background:#222428"></div><div class="a" style="left:208px;top:147px;width:1px;height:40px;background:#34404b"></div><svg class="a" style="left:12px;top:155px" width="48" height="24"><rect x="0.5" y="0.5" width="47" height="23" fill="#fff" stroke="#c8c8c8"/><path d="M10 1h1v1h-1zM23 1h1v1h-1zM30 1h1v1h-1zM37 1h1v1h-1zM44 1h1v1h-1zM2 2h1v1h-1zM9 2h1v1h-1zM16 2h1v1h-1zM22 2h1v1h-1zM29 2h1v1h-1zM36 2h1v1h-1zM43 2h1v1h-1zM1 3h1v1h-1zM8 3h1v1h-1zM15 3h1v1h-1zM21 3h1v1h-1zM28 3h1v1h-1zM35 3h1v1h-1zM42 3h1v1h-1zM7 4h1v1h-1zM14 4h1v1h-1zM20 4h1v1h-1zM27 4h1v1h-1zM34 4h1v1h-1zM41 4h1v1h-1zM6 5h1v1h-1zM13 5h1v1h-1zM19 5h1v1h-1zM33 5h1v1h-1zM5 6h1v1h-1zM18 6h1v1h-1zM32 6h1v1h-1zM46 6h1v1h-1zM4 7h1v1h-1zM17 7h1v1h-1zM24 7h1v1h-1zM31 7h1v1h-1zM38 7h1v1h-1zM45 7h1v1h-1zM3 8h1v1h-1zM10 8h1v1h-1zM16 8h1v1h-1zM30 8h1v1h-1zM44 8h1v1h-1zM2 9h1v1h-1zM15 9h1v1h-1zM29 9h1v1h-1zM43 9h1v1h-1zM1 10h1v1h-1zM14 10h1v1h-1zM21 10h1v1h-1zM28 10h1v1h-1zM35 10h1v1h-1zM42 10h1v1h-1zM7 11h1v1h-1zM13 11h1v1h-1zM20 11h1v1h-1zM27 11h1v1h-1zM34 11h1v1h-1zM41 11h1v1h-1zM6 12h1v1h-1zM12 12h1v1h-1zM19 12h1v1h-1zM26 12h1v1h-1zM33 12h1v1h-1zM40 12h1v1h-1zM5 13h1v1h-1zM11 13h1v1h-1zM18 13h1v1h-1zM25 13h1v1h-1zM32 13h1v1h-1zM39 13h1v1h-1zM46 13h1v1h-1zM4 14h1v1h-1zM10 14h1v1h-1zM24 14h1v1h-1zM38 14h1v1h-1zM9 15h1v1h-1zM23 15h1v1h-1zM37 15h1v1h-1zM8 16h1v1h-1zM15 16h1v1h-1zM22 16h1v1h-1zM29 16h1v1h-1zM36 16h1v1h-1zM43 16h1v1h-1zM1 17h1v1h-1zM7 17h1v1h-1zM21 17h1v1h-1zM35 17h1v1h-1zM6 18h1v1h-1zM20 18h1v1h-1zM34 18h1v1h-1zM5 19h1v1h-1zM12 19h1v1h-1zM19 19h1v1h-1zM26 19h1v1h-1zM33 19h1v1h-1zM40 19h1v1h-1zM4 20h1v1h-1zM11 20h1v1h-1zM18 20h1v1h-1zM25 20h1v1h-1zM32 20h1v1h-1zM39 20h1v1h-1zM46 20h1v1h-1zM3 21h1v1h-1zM10 21h1v1h-1zM17 21h1v1h-1zM24 21h1v1h-1zM31 21h1v1h-1zM38 21h1v1h-1zM45 21h1v1h-1zM2 22h1v1h-1zM9 22h1v1h-1zM16 22h1v1h-1zM23 22h1v1h-1zM30 22h1v1h-1zM37 22h1v1h-1zM44 22h1v1h-1z" fill="#000"/></svg><div class="a t" style="left:70px;top:162.69px;font-size:11px;color:#e4e4e4">Brass</div><div class="a" style="left:0;top:188px;width:215px;height:40px;background:#2e3136"></div><div class="a" style="left:0;top:228px;width:215px;height:1px;background:#222428"></div><div class="a" style="left:208px;top:188px;width:1px;height:40px;background:#34404b"></div><svg class="a" style="left:12px;top:196px" width="48" height="24"><rect x="0.5" y="0.5" width="47" height="23" fill="#fff" stroke="#c8c8c8"/><path d="M10 1h1v1h-1zM23 1h1v1h-1zM30 1h1v1h-1zM37 1h1v1h-1zM44 1h1v1h-1zM2 2h1v1h-1zM9 2h1v1h-1zM16 2h1v1h-1zM22 2h1v1h-1zM29 2h1v1h-1zM36 2h1v1h-1zM43 2h1v1h-1zM1 3h1v1h-1zM8 3h1v1h-1zM15 3h1v1h-1zM21 3h1v1h-1zM28 3h1v1h-1zM35 3h1v1h-1zM42 3h1v1h-1zM7 4h1v1h-1zM14 4h1v1h-1zM20 4h1v1h-1zM27 4h1v1h-1zM34 4h1v1h-1zM41 4h1v1h-1zM6 5h1v1h-1zM13 5h1v1h-1zM19 5h1v1h-1zM33 5h1v1h-1zM5 6h1v1h-1zM18 6h1v1h-1zM32 6h1v1h-1zM46 6h1v1h-1zM4 7h1v1h-1zM17 7h1v1h-1zM24 7h1v1h-1zM31 7h1v1h-1zM38 7h1v1h-1zM45 7h1v1h-1zM3 8h1v1h-1zM10 8h1v1h-1zM16 8h1v1h-1zM30 8h1v1h-1zM44 8h1v1h-1zM2 9h1v1h-1zM15 9h1v1h-1zM29 9h1v1h-1zM43 9h1v1h-1zM1 10h1v1h-1zM14 10h1v1h-1zM21 10h1v1h-1zM28 10h1v1h-1zM35 10h1v1h-1zM42 10h1v1h-1zM7 11h1v1h-1zM13 11h1v1h-1zM20 11h1v1h-1zM27 11h1v1h-1zM34 11h1v1h-1zM41 11h1v1h-1zM6 12h1v1h-1zM12 12h1v1h-1zM19 12h1v1h-1zM26 12h1v1h-1zM33 12h1v1h-1zM40 12h1v1h-1zM5 13h1v1h-1zM11 13h1v1h-1zM18 13h1v1h-1zM25 13h1v1h-1zM32 13h1v1h-1zM39 13h1v1h-1zM46 13h1v1h-1zM4 14h1v1h-1zM10 14h1v1h-1zM24 14h1v1h-1zM38 14h1v1h-1zM9 15h1v1h-1zM23 15h1v1h-1zM37 15h1v1h-1zM8 16h1v1h-1zM15 16h1v1h-1zM22 16h1v1h-1zM29 16h1v1h-1zM36 16h1v1h-1zM43 16h1v1h-1zM1 17h1v1h-1zM7 17h1v1h-1zM21 17h1v1h-1zM35 17h1v1h-1zM6 18h1v1h-1zM20 18h1v1h-1zM34 18h1v1h-1zM5 19h1v1h-1zM12 19h1v1h-1zM19 19h1v1h-1zM26 19h1v1h-1zM33 19h1v1h-1zM40 19h1v1h-1zM4 20h1v1h-1zM11 20h1v1h-1zM18 20h1v1h-1zM25 20h1v1h-1zM32 20h1v1h-1zM39 20h1v1h-1zM46 20h1v1h-1zM3 21h1v1h-1zM10 21h1v1h-1zM17 21h1v1h-1zM24 21h1v1h-1zM31 21h1v1h-1zM38 21h1v1h-1zM45 21h1v1h-1zM2 22h1v1h-1zM9 22h1v1h-1zM16 22h1v1h-1zM23 22h1v1h-1zM30 22h1v1h-1zM37 22h1v1h-1zM44 22h1v1h-1z" fill="#000"/></svg><div class="a t" style="left:70px;top:203.69px;font-size:11px;color:#e4e4e4">Bronze</div><div class="a" style="left:0;top:229px;width:215px;height:40px;background:#2e3136"></div><div class="a" style="left:0;top:269px;width:215px;height:1px;background:#222428"></div><div class="a" style="left:208px;top:229px;width:1px;height:40px;background:#34404b"></div><svg class="a" style="left:12px;top:237px" width="48" height="24"><rect x="0.5" y="0.5" width="47" height="23" fill="#fff" stroke="#c8c8c8"/><path d="M7 1h1v1h-1zM11 1h1v1h-1zM13 1h1v1h-1zM17 1h1v1h-1zM23 1h1v1h-1zM27 1h1v1h-1zM38 1h1v1h-1zM41 1h3v1h-3zM2 2h2v1h-2zM6 2h3v1h-3zM10 2h6v1h-6zM17 2h3v1h-3zM22 2h3v1h-3zM26 2h5v1h-5zM33 2h2v1h-2zM38 2h3v1h-3zM42 2h1v1h-1zM46 2h1v1h-1zM2 3h3v1h-3zM6 3h3v1h-3zM11 3h1v1h-1zM22 3h2v1h-2zM26 3h6v1h-6zM33 3h1v1h-1zM35 3h1v1h-1zM46 3h1v1h-1zM2 4h3v1h-3zM19 4h1v1h-1zM23 4h1v1h-1zM26 4h3v1h-3zM30 4h2v1h-2zM33 4h3v1h-3zM46 4h1v1h-1zM2 5h3v1h-3zM6 5h2v1h-2zM14 5h1v1h-1zM18 5h3v1h-3zM22 5h3v1h-3zM26 5h2v1h-2zM30 5h3v1h-3zM34 5h2v1h-2zM46 5h1v1h-1zM3 6h1v1h-1zM5 6h3v1h-3zM9 6h2v1h-2zM13 6h3v1h-3zM19 6h1v1h-1zM23 6h1v1h-1zM26 6h1v1h-1zM28 6h1v1h-1zM30 6h2v1h-2zM34 6h5v1h-5zM42 6h2v1h-2zM46 6h1v1h-1zM5 7h3v1h-3zM9 7h3v1h-3zM13 7h3v1h-3zM26 7h3v1h-3zM37 7h3v1h-3zM42 7h3v1h-3zM2 8h1v1h-1zM9 8h3v1h-3zM13 8h3v1h-3zM23 8h1v1h-1zM37 8h3v1h-3zM42 8h3v1h-3zM1 9h3v1h-3zM13 9h2v1h-2zM18 9h2v1h-2zM22 9h4v1h-4zM38 9h3v1h-3zM2 10h1v1h-1zM5 10h2v1h-2zM10 10h2v1h-2zM13 10h3v1h-3zM17 10h3v1h-3zM23 10h5v1h-5zM29 10h2v1h-2zM33 10h2v1h-2zM38 10h3v1h-3zM42 10h2v1h-2zM45 10h2v1h-2zM5 11h3v1h-3zM10 11h3v1h-3zM17 11h2v1h-2zM29 11h3v1h-3zM33 11h3v1h-3zM42 11h5v1h-5zM6 12h2v1h-2zM10 12h3v1h-3zM18 12h1v1h-1zM26 12h1v1h-1zM33 12h3v1h-3zM42 12h3v1h-3zM6 13h5v1h-5zM15 13h5v1h-5zM23 13h1v1h-1zM25 13h3v1h-3zM34 13h1v1h-1zM37 13h2v1h-2zM43 13h1v1h-1zM1 14h2v1h-2zM7 14h1v1h-1zM9 14h1v1h-1zM11 14h1v1h-1zM14 14h3v1h-3zM18 14h1v1h-1zM22 14h6v1h-6zM30 14h2v1h-2zM33 14h3v1h-3zM37 14h1v1h-1zM39 14h1v1h-1zM42 14h3v1h-3zM46 14h1v1h-1zM1 15h3v1h-3zM9 15h3v1h-3zM14 15h3v1h-3zM23 15h1v1h-1zM26 15h1v1h-1zM30 15h6v1h-6zM37 15h3v1h-3zM42 15h3v1h-3zM46 15h1v1h-1zM6 16h1v1h-1zM14 16h3v1h-3zM18 16h2v1h-2zM30 16h6v1h-6zM43 16h1v1h-1zM46 16h1v1h-1zM5 17h3v1h-3zM14 17h2v1h-2zM17 17h3v1h-3zM22 17h1v1h-1zM25 17h2v1h-2zM30 17h1v1h-1zM33 17h3v1h-3zM37 17h1v1h-1zM42 17h1v1h-1zM1 18h1v1h-1zM6 18h2v1h-2zM10 18h2v1h-2zM13 18h3v1h-3zM17 18h3v1h-3zM21 18h3v1h-3zM25 18h3v1h-3zM29 18h3v1h-3zM33 18h3v1h-3zM37 18h3v1h-3zM41 18h3v1h-3zM46 18h1v1h-1zM1 19h3v1h-3zM10 19h5v1h-5zM21 19h3v1h-3zM30 19h1v1h-1zM33 19h3v1h-3zM41 19h3v1h-3zM46 19h1v1h-1zM10 20h3v1h-3zM15 20h1v1h-1zM21 20h3v1h-3zM41 20h3v1h-3zM46 20h1v1h-1zM2 21h2v1h-2zM6 21h2v1h-2zM14 21h3v1h-3zM21 21h3v1h-3zM26 21h1v1h-1zM30 21h1v1h-1zM1 22h3v1h-3zM6 22h3v1h-3zM10 22h1v1h-1zM14 22h2v1h-2zM18 22h2v1h-2zM21 22h3v1h-3zM25 22h3v1h-3zM29 22h3v1h-3zM34 22h2v1h-2zM37 22h2v1h-2zM42 22h2v1h-2zM46 22h1v1h-1z" fill="#000"/></svg><div class="a t" style="left:70px;top:244.69px;font-size:11px;color:#e4e4e4">Concrete, Plain</div><div class="a" style="left:215px;top:0;width:17px;height:293px;background:#f0f0f0;border-left:1px solid #fafafa;border-right:1px solid #f8f8f8"></div><div class="a" style="left:223px;top:17px;width:2px;height:50px;background:#858585"></div></div><svg class="a" style="left:574px;top:43px" width="120" height="80"><rect x="0.5" y="0.5" width="119" height="79" fill="#fff" stroke="#b8b8b8"/><path d="M5 1h1v1h-1zM22 1h1v1h-1zM38 1h1v1h-1zM46 1h1v1h-1zM63 1h1v1h-1zM79 1h1v1h-1zM87 1h1v1h-1zM4 2h1v1h-1zM21 2h1v1h-1zM37 2h1v1h-1zM45 2h1v1h-1zM62 2h1v1h-1zM78 2h1v1h-1zM86 2h1v1h-1zM3 3h1v1h-1zM20 3h1v1h-1zM36 3h1v1h-1zM44 3h1v1h-1zM61 3h1v1h-1zM77 3h1v1h-1zM85 3h1v1h-1zM102 3h1v1h-1zM118 3h1v1h-1zM2 4h1v1h-1zM19 4h1v1h-1zM35 4h1v1h-1zM43 4h1v1h-1zM76 4h1v1h-1zM84 4h1v1h-1zM117 4h1v1h-1zM1 5h1v1h-1zM18 5h1v1h-1zM34 5h1v1h-1zM42 5h1v1h-1zM75 5h1v1h-1zM83 5h1v1h-1zM116 5h1v1h-1zM17 6h1v1h-1zM33 6h1v1h-1zM41 6h1v1h-1zM74 6h1v1h-1zM82 6h1v1h-1zM115 6h1v1h-1zM16 7h1v1h-1zM32 7h1v1h-1zM40 7h1v1h-1zM57 7h1v1h-1zM73 7h1v1h-1zM81 7h1v1h-1zM114 7h1v1h-1zM31 8h1v1h-1zM39 8h1v1h-1zM72 8h1v1h-1zM80 8h1v1h-1zM97 8h1v1h-1zM113 8h1v1h-1zM30 9h1v1h-1zM38 9h1v1h-1zM71 9h1v1h-1zM79 9h1v1h-1zM96 9h1v1h-1zM112 9h1v1h-1zM29 10h1v1h-1zM37 10h1v1h-1zM70 10h1v1h-1zM78 10h1v1h-1zM95 10h1v1h-1zM111 10h1v1h-1zM12 11h1v1h-1zM28 11h1v1h-1zM36 11h1v1h-1zM69 11h1v1h-1zM77 11h1v1h-1zM94 11h1v1h-1zM110 11h1v1h-1zM118 11h1v1h-1zM27 12h1v1h-1zM35 12h1v1h-1zM52 12h1v1h-1zM68 12h1v1h-1zM76 12h1v1h-1zM93 12h1v1h-1zM109 12h1v1h-1zM117 12h1v1h-1zM26 13h1v1h-1zM34 13h1v1h-1zM51 13h1v1h-1zM67 13h1v1h-1zM75 13h1v1h-1zM92 13h1v1h-1zM108 13h1v1h-1zM116 13h1v1h-1zM25 14h1v1h-1zM33 14h1v1h-1zM50 14h1v1h-1zM66 14h1v1h-1zM74 14h1v1h-1zM91 14h1v1h-1zM107 14h1v1h-1zM115 14h1v1h-1zM24 15h1v1h-1zM32 15h1v1h-1zM49 15h1v1h-1zM65 15h1v1h-1zM73 15h1v1h-1zM90 15h1v1h-1zM106 15h1v1h-1zM114 15h1v1h-1zM7 16h1v1h-1zM23 16h1v1h-1zM31 16h1v1h-1zM48 16h1v1h-1zM64 16h1v1h-1zM72 16h1v1h-1zM105 16h1v1h-1zM113 16h1v1h-1zM6 17h1v1h-1zM22 17h1v1h-1zM30 17h1v1h-1zM47 17h1v1h-1zM63 17h1v1h-1zM71 17h1v1h-1zM104 17h1v1h-1zM112 17h1v1h-1zM5 18h1v1h-1zM21 18h1v1h-1zM29 18h1v1h-1zM46 18h1v1h-1zM62 18h1v1h-1zM70 18h1v1h-1zM103 18h1v1h-1zM111 18h1v1h-1zM4 19h1v1h-1zM20 19h1v1h-1zM28 19h1v1h-1zM45 19h1v1h-1zM61 19h1v1h-1zM69 19h1v1h-1zM86 19h1v1h-1zM102 19h1v1h-1zM110 19h1v1h-1zM3 20h1v1h-1zM19 20h1v1h-1zM27 20h1v1h-1zM60 20h1v1h-1zM68 20h1v1h-1zM101 20h1v1h-1zM109 20h1v1h-1zM2 21h1v1h-1zM18 21h1v1h-1zM26 21h1v1h-1zM59 21h1v1h-1zM67 21h1v1h-1zM100 21h1v1h-1zM108 21h1v1h-1zM1 22h1v1h-1zM17 22h1v1h-1zM25 22h1v1h-1zM58 22h1v1h-1zM66 22h1v1h-1zM99 22h1v1h-1zM107 22h1v1h-1zM16 23h1v1h-1zM24 23h1v1h-1zM41 23h1v1h-1zM57 23h1v1h-1zM65 23h1v1h-1zM98 23h1v1h-1zM106 23h1v1h-1zM15 24h1v1h-1zM23 24h1v1h-1zM56 24h1v1h-1zM64 24h1v1h-1zM81 24h1v1h-1zM97 24h1v1h-1zM105 24h1v1h-1zM14 25h1v1h-1zM22 25h1v1h-1zM55 25h1v1h-1zM63 25h1v1h-1zM80 25h1v1h-1zM96 25h1v1h-1zM104 25h1v1h-1zM13 26h1v1h-1zM21 26h1v1h-1zM54 26h1v1h-1zM62 26h1v1h-1zM79 26h1v1h-1zM95 26h1v1h-1zM103 26h1v1h-1zM12 27h1v1h-1zM20 27h1v1h-1zM53 27h1v1h-1zM61 27h1v1h-1zM78 27h1v1h-1zM94 27h1v1h-1zM102 27h1v1h-1zM11 28h1v1h-1zM19 28h1v1h-1zM36 28h1v1h-1zM52 28h1v1h-1zM60 28h1v1h-1zM77 28h1v1h-1zM93 28h1v1h-1zM101 28h1v1h-1zM10 29h1v1h-1zM18 29h1v1h-1zM35 29h1v1h-1zM51 29h1v1h-1zM59 29h1v1h-1zM76 29h1v1h-1zM92 29h1v1h-1zM100 29h1v1h-1zM9 30h1v1h-1zM17 30h1v1h-1zM34 30h1v1h-1zM50 30h1v1h-1zM58 30h1v1h-1zM75 30h1v1h-1zM91 30h1v1h-1zM99 30h1v1h-1zM8 31h1v1h-1zM16 31h1v1h-1zM33 31h1v1h-1zM49 31h1v1h-1zM57 31h1v1h-1zM74 31h1v1h-1zM90 31h1v1h-1zM98 31h1v1h-1zM115 31h1v1h-1zM7 32h1v1h-1zM15 32h1v1h-1zM32 32h1v1h-1zM48 32h1v1h-1zM56 32h1v1h-1zM89 32h1v1h-1zM97 32h1v1h-1zM6 33h1v1h-1zM14 33h1v1h-1zM31 33h1v1h-1zM47 33h1v1h-1zM55 33h1v1h-1zM88 33h1v1h-1zM96 33h1v1h-1zM5 34h1v1h-1zM13 34h1v1h-1zM30 34h1v1h-1zM46 34h1v1h-1zM54 34h1v1h-1zM87 34h1v1h-1zM95 34h1v1h-1zM4 35h1v1h-1zM12 35h1v1h-1zM29 35h1v1h-1zM45 35h1v1h-1zM53 35h1v1h-1zM70 35h1v1h-1zM86 35h1v1h-1zM94 35h1v1h-1zM3 36h1v1h-1zM11 36h1v1h-1zM44 36h1v1h-1zM52 36h1v1h-1zM85 36h1v1h-1zM93 36h1v1h-1zM110 36h1v1h-1zM2 37h1v1h-1zM10 37h1v1h-1zM43 37h1v1h-1zM51 37h1v1h-1zM84 37h1v1h-1zM92 37h1v1h-1zM109 37h1v1h-1zM1 38h1v1h-1zM9 38h1v1h-1zM42 38h1v1h-1zM50 38h1v1h-1zM83 38h1v1h-1zM91 38h1v1h-1zM108 38h1v1h-1zM8 39h1v1h-1zM25 39h1v1h-1zM41 39h1v1h-1zM49 39h1v1h-1zM82 39h1v1h-1zM90 39h1v1h-1zM107 39h1v1h-1zM7 40h1v1h-1zM40 40h1v1h-1zM48 40h1v1h-1zM65 40h1v1h-1zM81 40h1v1h-1zM89 40h1v1h-1zM106 40h1v1h-1zM6 41h1v1h-1zM39 41h1v1h-1zM47 41h1v1h-1zM64 41h1v1h-1zM80 41h1v1h-1zM88 41h1v1h-1zM105 41h1v1h-1zM5 42h1v1h-1zM38 42h1v1h-1zM46 42h1v1h-1zM63 42h1v1h-1zM79 42h1v1h-1zM87 42h1v1h-1zM104 42h1v1h-1zM4 43h1v1h-1zM37 43h1v1h-1zM45 43h1v1h-1zM62 43h1v1h-1zM78 43h1v1h-1zM86 43h1v1h-1zM103 43h1v1h-1zM3 44h1v1h-1zM20 44h1v1h-1zM36 44h1v1h-1zM44 44h1v1h-1zM61 44h1v1h-1zM77 44h1v1h-1zM85 44h1v1h-1zM118 44h1v1h-1zM2 45h1v1h-1zM19 45h1v1h-1zM35 45h1v1h-1zM43 45h1v1h-1zM60 45h1v1h-1zM76 45h1v1h-1zM84 45h1v1h-1zM117 45h1v1h-1zM1 46h1v1h-1zM18 46h1v1h-1zM34 46h1v1h-1zM42 46h1v1h-1zM59 46h1v1h-1zM75 46h1v1h-1zM83 46h1v1h-1zM116 46h1v1h-1zM17 47h1v1h-1zM33 47h1v1h-1zM41 47h1v1h-1zM58 47h1v1h-1zM74 47h1v1h-1zM82 47h1v1h-1zM99 47h1v1h-1zM115 47h1v1h-1zM16 48h1v1h-1zM32 48h1v1h-1zM40 48h1v1h-1zM73 48h1v1h-1zM81 48h1v1h-1zM114 48h1v1h-1zM15 49h1v1h-1zM31 49h1v1h-1zM39 49h1v1h-1zM72 49h1v1h-1zM80 49h1v1h-1zM113 49h1v1h-1zM14 50h1v1h-1zM30 50h1v1h-1zM38 50h1v1h-1zM71 50h1v1h-1zM79 50h1v1h-1zM112 50h1v1h-1zM13 51h1v1h-1zM29 51h1v1h-1zM37 51h1v1h-1zM54 51h1v1h-1zM70 51h1v1h-1zM78 51h1v1h-1zM111 51h1v1h-1zM28 52h1v1h-1zM36 52h1v1h-1zM69 52h1v1h-1zM77 52h1v1h-1zM94 52h1v1h-1zM110 52h1v1h-1zM118 52h1v1h-1zM27 53h1v1h-1zM35 53h1v1h-1zM68 53h1v1h-1zM76 53h1v1h-1zM93 53h1v1h-1zM109 53h1v1h-1zM117 53h1v1h-1zM26 54h1v1h-1zM34 54h1v1h-1zM67 54h1v1h-1zM75 54h1v1h-1zM92 54h1v1h-1zM108 54h1v1h-1zM116 54h1v1h-1zM9 55h1v1h-1zM25 55h1v1h-1zM33 55h1v1h-1zM66 55h1v1h-1zM74 55h1v1h-1zM91 55h1v1h-1zM107 55h1v1h-1zM115 55h1v1h-1zM24 56h1v1h-1zM32 56h1v1h-1zM49 56h1v1h-1zM65 56h1v1h-1zM73 56h1v1h-1zM90 56h1v1h-1zM106 56h1v1h-1zM114 56h1v1h-1zM23 57h1v1h-1zM31 57h1v1h-1zM48 57h1v1h-1zM64 57h1v1h-1zM72 57h1v1h-1zM89 57h1v1h-1zM105 57h1v1h-1zM113 57h1v1h-1zM22 58h1v1h-1zM30 58h1v1h-1zM47 58h1v1h-1zM63 58h1v1h-1zM71 58h1v1h-1zM88 58h1v1h-1zM104 58h1v1h-1zM112 58h1v1h-1zM21 59h1v1h-1zM29 59h1v1h-1zM46 59h1v1h-1zM62 59h1v1h-1zM70 59h1v1h-1zM87 59h1v1h-1zM103 59h1v1h-1zM111 59h1v1h-1zM4 60h1v1h-1zM20 60h1v1h-1zM28 60h1v1h-1zM45 60h1v1h-1zM61 60h1v1h-1zM69 60h1v1h-1zM102 60h1v1h-1zM110 60h1v1h-1zM3 61h1v1h-1zM19 61h1v1h-1zM27 61h1v1h-1zM44 61h1v1h-1zM60 61h1v1h-1zM68 61h1v1h-1zM101 61h1v1h-1zM109 61h1v1h-1zM2 62h1v1h-1zM18 62h1v1h-1zM26 62h1v1h-1zM43 62h1v1h-1zM59 62h1v1h-1zM67 62h1v1h-1zM100 62h1v1h-1zM108 62h1v1h-1zM1 63h1v1h-1zM17 63h1v1h-1zM25 63h1v1h-1zM42 63h1v1h-1zM58 63h1v1h-1zM66 63h1v1h-1zM83 63h1v1h-1zM99 63h1v1h-1zM107 63h1v1h-1zM16 64h1v1h-1zM24 64h1v1h-1zM57 64h1v1h-1zM65 64h1v1h-1zM98 64h1v1h-1zM106 64h1v1h-1zM15 65h1v1h-1zM23 65h1v1h-1zM56 65h1v1h-1zM64 65h1v1h-1zM97 65h1v1h-1zM105 65h1v1h-1zM14 66h1v1h-1zM22 66h1v1h-1zM55 66h1v1h-1zM63 66h1v1h-1zM96 66h1v1h-1zM104 66h1v1h-1zM13 67h1v1h-1zM21 67h1v1h-1zM38 67h1v1h-1zM54 67h1v1h-1zM62 67h1v1h-1zM95 67h1v1h-1zM103 67h1v1h-1zM12 68h1v1h-1zM20 68h1v1h-1zM53 68h1v1h-1zM61 68h1v1h-1zM78 68h1v1h-1zM94 68h1v1h-1zM102 68h1v1h-1zM11 69h1v1h-1zM19 69h1v1h-1zM52 69h1v1h-1zM60 69h1v1h-1zM77 69h1v1h-1zM93 69h1v1h-1zM101 69h1v1h-1zM118 69h1v1h-1zM10 70h1v1h-1zM18 70h1v1h-1zM51 70h1v1h-1zM59 70h1v1h-1zM76 70h1v1h-1zM92 70h1v1h-1zM100 70h1v1h-1zM117 70h1v1h-1zM9 71h1v1h-1zM17 71h1v1h-1zM50 71h1v1h-1zM58 71h1v1h-1zM75 71h1v1h-1zM91 71h1v1h-1zM99 71h1v1h-1zM116 71h1v1h-1zM8 72h1v1h-1zM16 72h1v1h-1zM33 72h1v1h-1zM49 72h1v1h-1zM57 72h1v1h-1zM74 72h1v1h-1zM90 72h1v1h-1zM98 72h1v1h-1zM7 73h1v1h-1zM15 73h1v1h-1zM32 73h1v1h-1zM48 73h1v1h-1zM56 73h1v1h-1zM73 73h1v1h-1zM89 73h1v1h-1zM97 73h1v1h-1zM6 74h1v1h-1zM14 74h1v1h-1zM31 74h1v1h-1zM47 74h1v1h-1zM55 74h1v1h-1zM72 74h1v1h-1zM88 74h1v1h-1zM96 74h1v1h-1zM5 75h1v1h-1zM13 75h1v1h-1zM30 75h1v1h-1zM46 75h1v1h-1zM54 75h1v1h-1zM71 75h1v1h-1zM87 75h1v1h-1zM95 75h1v1h-1zM112 75h1v1h-1zM4 76h1v1h-1zM12 76h1v1h-1zM29 76h1v1h-1zM45 76h1v1h-1zM53 76h1v1h-1zM86 76h1v1h-1zM94 76h1v1h-1zM3 77h1v1h-1zM11 77h1v1h-1zM28 77h1v1h-1zM44 77h1v1h-1zM52 77h1v1h-1zM85 77h1v1h-1zM93 77h1v1h-1zM2 78h1v1h-1zM10 78h1v1h-1zM27 78h1v1h-1zM43 78h1v1h-1zM51 78h1v1h-1zM84 78h1v1h-1zM92 78h1v1h-1z" fill="#000"/></svg><div class="a t" style="left:704px;top:47.69px;font-size:11px;color:#e6e6e6;font-weight:normal;">Name</div><div class="a" style="left:742px;top:43px;width:160px;height:21px;border:2px solid #f4f4f4;border-radius:2px;background:#2a2c30"></div><div class="a t" style="left:748px;top:47.69px;font-size:11px;color:#f0f0f0;font-weight:normal;">Concrete_zelezobeton</div><div class="a t" style="left:704px;top:79.19px;font-size:11px;color:#e6e6e6;font-weight:normal;">Type</div><div class="a" style="left:742px;top:74px;width:72px;height:21px;background:#46494e"></div><div class="a t" style="left:744px;top:79.69px;font-size:11px;color:#f0f0f0;font-weight:normal;">Generic</div><svg class="a" style="left:798px;top:82px" width="12" height="8"><path d="M2.5 2.5L5.5 5.5L8.5 2.5" stroke="#fff" stroke-width="1.15" fill="none"/></svg><div class="a" style="left:579px;top:166px;width:300px;height:4px;background:#232528"></div><div class="a" style="left:579px;top:428px;width:300px;height:4px;background:#232528"></div><div class="a" style="left:579px;top:175px;width:301px;height:1px;background:#a8a8a8"></div><div class="a" style="left:580px;top:176px;width:300px;height:1px;background:#f2f2f2"></div><div class="a" style="left:580px;top:176px;width:1px;height:61px;background:#f2f2f2"></div><div class="a" style="left:579px;top:176px;width:1px;height:61px;background:#9a9a9a"></div><div class="a" style="left:580px;top:206px;width:300px;height:1px;background:#9a9a9a"></div><div class="a" style="left:580px;top:207px;width:29px;height:1px;background:#f2f2f2"></div><div class="a" style="left:608px;top:177px;width:1px;height:60px;background:#9a9a9a"></div><div class="a" style="left:609px;top:177px;width:1px;height:29px;background:#f2f2f2"></div><div class="a" style="left:773px;top:177px;width:1px;height:29px;background:#9a9a9a"></div><div class="a" style="left:774px;top:177px;width:1px;height:29px;background:#f2f2f2"></div><div class="a" style="left:774px;top:207px;width:1px;height:30px;background:#505356"></div><div class="a" style="left:579px;top:236px;width:30px;height:1px;background:#b4b4b4"></div><div class="a" style="left:609px;top:236px;width:300px;height:1px;background:#4d5054"></div><div class="a t" style="left:670px;top:184.84px;font-size:12px;color:#e8e8e8;font-weight:bold;letter-spacing:0.25px">Pattern</div><div class="a t" style="left:840px;top:184.84px;font-size:12px;color:#e8e8e8;font-weight:bold;letter-spacing:0.25px">Name</div><div class="a t" style="left:590px;top:216.69px;font-size:11px;color:#e8e8e8;font-weight:bold;">1</div><svg class="a" style="left:612px;top:210px" width="158" height="23"><rect width="158" height="23" fill="#fff"/><path d="M7 0h1v1h-1zM10 0h1v1h-1zM17 0h1v1h-1zM23 0h1v1h-1zM26 0h1v1h-1zM33 0h1v1h-1zM39 0h1v1h-1zM42 0h1v1h-1zM55 0h1v1h-1zM58 0h1v1h-1zM65 0h1v1h-1zM71 0h1v1h-1zM74 0h1v1h-1zM81 0h1v1h-1zM87 0h1v1h-1zM90 0h1v1h-1zM97 0h1v1h-1zM103 0h1v1h-1zM106 0h1v1h-1zM119 0h1v1h-1zM122 0h1v1h-1zM129 0h1v1h-1zM135 0h1v1h-1zM138 0h1v1h-1zM145 0h1v1h-1zM151 0h1v1h-1zM154 0h1v1h-1zM0 1h1v1h-1zM6 1h1v1h-1zM9 1h1v1h-1zM16 1h1v1h-1zM22 1h1v1h-1zM25 1h1v1h-1zM38 1h1v1h-1zM41 1h1v1h-1zM48 1h1v1h-1zM54 1h1v1h-1zM57 1h1v1h-1zM64 1h1v1h-1zM70 1h1v1h-1zM73 1h1v1h-1zM86 1h1v1h-1zM89 1h1v1h-1zM96 1h1v1h-1zM102 1h1v1h-1zM105 1h1v1h-1zM112 1h1v1h-1zM118 1h1v1h-1zM121 1h1v1h-1zM128 1h1v1h-1zM134 1h1v1h-1zM137 1h1v1h-1zM150 1h1v1h-1zM153 1h1v1h-1zM5 2h1v1h-1zM8 2h1v1h-1zM15 2h1v1h-1zM21 2h1v1h-1zM24 2h1v1h-1zM31 2h1v1h-1zM37 2h1v1h-1zM40 2h1v1h-1zM47 2h1v1h-1zM53 2h1v1h-1zM56 2h1v1h-1zM69 2h1v1h-1zM72 2h1v1h-1zM79 2h1v1h-1zM85 2h1v1h-1zM88 2h1v1h-1zM95 2h1v1h-1zM101 2h1v1h-1zM104 2h1v1h-1zM117 2h1v1h-1zM120 2h1v1h-1zM127 2h1v1h-1zM133 2h1v1h-1zM136 2h1v1h-1zM143 2h1v1h-1zM149 2h1v1h-1zM152 2h1v1h-1zM4 3h1v1h-1zM7 3h1v1h-1zM14 3h1v1h-1zM20 3h1v1h-1zM23 3h1v1h-1zM36 3h1v1h-1zM39 3h1v1h-1zM46 3h1v1h-1zM52 3h1v1h-1zM55 3h1v1h-1zM62 3h1v1h-1zM68 3h1v1h-1zM71 3h1v1h-1zM78 3h1v1h-1zM84 3h1v1h-1zM87 3h1v1h-1zM100 3h1v1h-1zM103 3h1v1h-1zM110 3h1v1h-1zM116 3h1v1h-1zM119 3h1v1h-1zM126 3h1v1h-1zM132 3h1v1h-1zM135 3h1v1h-1zM148 3h1v1h-1zM151 3h1v1h-1zM3 4h1v1h-1zM6 4h1v1h-1zM19 4h1v1h-1zM22 4h1v1h-1zM29 4h1v1h-1zM35 4h1v1h-1zM38 4h1v1h-1zM45 4h1v1h-1zM51 4h1v1h-1zM54 4h1v1h-1zM67 4h1v1h-1zM70 4h1v1h-1zM77 4h1v1h-1zM83 4h1v1h-1zM86 4h1v1h-1zM93 4h1v1h-1zM99 4h1v1h-1zM102 4h1v1h-1zM109 4h1v1h-1zM115 4h1v1h-1zM118 4h1v1h-1zM131 4h1v1h-1zM134 4h1v1h-1zM141 4h1v1h-1zM147 4h1v1h-1zM150 4h1v1h-1zM157 4h1v1h-1zM2 5h1v1h-1zM5 5h1v1h-1zM12 5h1v1h-1zM18 5h1v1h-1zM21 5h1v1h-1zM28 5h1v1h-1zM34 5h1v1h-1zM37 5h1v1h-1zM50 5h1v1h-1zM53 5h1v1h-1zM60 5h1v1h-1zM66 5h1v1h-1zM69 5h1v1h-1zM76 5h1v1h-1zM82 5h1v1h-1zM85 5h1v1h-1zM98 5h1v1h-1zM101 5h1v1h-1zM108 5h1v1h-1zM114 5h1v1h-1zM117 5h1v1h-1zM124 5h1v1h-1zM130 5h1v1h-1zM133 5h1v1h-1zM140 5h1v1h-1zM146 5h1v1h-1zM149 5h1v1h-1zM1 6h1v1h-1zM4 6h1v1h-1zM17 6h1v1h-1zM20 6h1v1h-1zM27 6h1v1h-1zM33 6h1v1h-1zM36 6h1v1h-1zM43 6h1v1h-1zM49 6h1v1h-1zM52 6h1v1h-1zM59 6h1v1h-1zM65 6h1v1h-1zM68 6h1v1h-1zM81 6h1v1h-1zM84 6h1v1h-1zM91 6h1v1h-1zM97 6h1v1h-1zM100 6h1v1h-1zM107 6h1v1h-1zM113 6h1v1h-1zM116 6h1v1h-1zM129 6h1v1h-1zM132 6h1v1h-1zM139 6h1v1h-1zM145 6h1v1h-1zM148 6h1v1h-1zM155 6h1v1h-1zM0 7h1v1h-1zM3 7h1v1h-1zM10 7h1v1h-1zM16 7h1v1h-1zM19 7h1v1h-1zM26 7h1v1h-1zM32 7h1v1h-1zM35 7h1v1h-1zM48 7h1v1h-1zM51 7h1v1h-1zM58 7h1v1h-1zM64 7h1v1h-1zM67 7h1v1h-1zM74 7h1v1h-1zM80 7h1v1h-1zM83 7h1v1h-1zM90 7h1v1h-1zM96 7h1v1h-1zM99 7h1v1h-1zM112 7h1v1h-1zM115 7h1v1h-1zM122 7h1v1h-1zM128 7h1v1h-1zM131 7h1v1h-1zM138 7h1v1h-1zM144 7h1v1h-1zM147 7h1v1h-1zM2 8h1v1h-1zM9 8h1v1h-1zM15 8h1v1h-1zM18 8h1v1h-1zM31 8h1v1h-1zM34 8h1v1h-1zM41 8h1v1h-1zM47 8h1v1h-1zM50 8h1v1h-1zM57 8h1v1h-1zM63 8h1v1h-1zM66 8h1v1h-1zM79 8h1v1h-1zM82 8h1v1h-1zM89 8h1v1h-1zM95 8h1v1h-1zM98 8h1v1h-1zM105 8h1v1h-1zM111 8h1v1h-1zM114 8h1v1h-1zM121 8h1v1h-1zM127 8h1v1h-1zM130 8h1v1h-1zM143 8h1v1h-1zM146 8h1v1h-1zM153 8h1v1h-1zM1 9h1v1h-1zM8 9h1v1h-1zM14 9h1v1h-1zM17 9h1v1h-1zM24 9h1v1h-1zM30 9h1v1h-1zM33 9h1v1h-1zM40 9h1v1h-1zM46 9h1v1h-1zM49 9h1v1h-1zM62 9h1v1h-1zM65 9h1v1h-1zM72 9h1v1h-1zM78 9h1v1h-1zM81 9h1v1h-1zM88 9h1v1h-1zM94 9h1v1h-1zM97 9h1v1h-1zM110 9h1v1h-1zM113 9h1v1h-1zM120 9h1v1h-1zM126 9h1v1h-1zM129 9h1v1h-1zM136 9h1v1h-1zM142 9h1v1h-1zM145 9h1v1h-1zM152 9h1v1h-1zM0 10h1v1h-1zM7 10h1v1h-1zM13 10h1v1h-1zM16 10h1v1h-1zM29 10h1v1h-1zM32 10h1v1h-1zM39 10h1v1h-1zM45 10h1v1h-1zM48 10h1v1h-1zM55 10h1v1h-1zM61 10h1v1h-1zM64 10h1v1h-1zM71 10h1v1h-1zM77 10h1v1h-1zM80 10h1v1h-1zM93 10h1v1h-1zM96 10h1v1h-1zM103 10h1v1h-1zM109 10h1v1h-1zM112 10h1v1h-1zM119 10h1v1h-1zM125 10h1v1h-1zM128 10h1v1h-1zM141 10h1v1h-1zM144 10h1v1h-1zM151 10h1v1h-1zM157 10h1v1h-1zM12 11h1v1h-1zM15 11h1v1h-1zM22 11h1v1h-1zM28 11h1v1h-1zM31 11h1v1h-1zM38 11h1v1h-1zM44 11h1v1h-1zM47 11h1v1h-1zM60 11h1v1h-1zM63 11h1v1h-1zM70 11h1v1h-1zM76 11h1v1h-1zM79 11h1v1h-1zM86 11h1v1h-1zM92 11h1v1h-1zM95 11h1v1h-1zM102 11h1v1h-1zM108 11h1v1h-1zM111 11h1v1h-1zM124 11h1v1h-1zM127 11h1v1h-1zM134 11h1v1h-1zM140 11h1v1h-1zM143 11h1v1h-1zM150 11h1v1h-1zM156 11h1v1h-1zM5 12h1v1h-1zM11 12h1v1h-1zM14 12h1v1h-1zM21 12h1v1h-1zM27 12h1v1h-1zM30 12h1v1h-1zM43 12h1v1h-1zM46 12h1v1h-1zM53 12h1v1h-1zM59 12h1v1h-1zM62 12h1v1h-1zM69 12h1v1h-1zM75 12h1v1h-1zM78 12h1v1h-1zM91 12h1v1h-1zM94 12h1v1h-1zM101 12h1v1h-1zM107 12h1v1h-1zM110 12h1v1h-1zM117 12h1v1h-1zM123 12h1v1h-1zM126 12h1v1h-1zM133 12h1v1h-1zM139 12h1v1h-1zM142 12h1v1h-1zM155 12h1v1h-1zM10 13h1v1h-1zM13 13h1v1h-1zM20 13h1v1h-1zM26 13h1v1h-1zM29 13h1v1h-1zM36 13h1v1h-1zM42 13h1v1h-1zM45 13h1v1h-1zM52 13h1v1h-1zM58 13h1v1h-1zM61 13h1v1h-1zM74 13h1v1h-1zM77 13h1v1h-1zM84 13h1v1h-1zM90 13h1v1h-1zM93 13h1v1h-1zM100 13h1v1h-1zM106 13h1v1h-1zM109 13h1v1h-1zM122 13h1v1h-1zM125 13h1v1h-1zM132 13h1v1h-1zM138 13h1v1h-1zM141 13h1v1h-1zM148 13h1v1h-1zM154 13h1v1h-1zM157 13h1v1h-1zM3 14h1v1h-1zM9 14h1v1h-1zM12 14h1v1h-1zM19 14h1v1h-1zM25 14h1v1h-1zM28 14h1v1h-1zM41 14h1v1h-1zM44 14h1v1h-1zM51 14h1v1h-1zM57 14h1v1h-1zM60 14h1v1h-1zM67 14h1v1h-1zM73 14h1v1h-1zM76 14h1v1h-1zM83 14h1v1h-1zM89 14h1v1h-1zM92 14h1v1h-1zM105 14h1v1h-1zM108 14h1v1h-1zM115 14h1v1h-1zM121 14h1v1h-1zM124 14h1v1h-1zM131 14h1v1h-1zM137 14h1v1h-1zM140 14h1v1h-1zM153 14h1v1h-1zM156 14h1v1h-1zM2 15h1v1h-1zM8 15h1v1h-1zM11 15h1v1h-1zM24 15h1v1h-1zM27 15h1v1h-1zM34 15h1v1h-1zM40 15h1v1h-1zM43 15h1v1h-1zM50 15h1v1h-1zM56 15h1v1h-1zM59 15h1v1h-1zM72 15h1v1h-1zM75 15h1v1h-1zM82 15h1v1h-1zM88 15h1v1h-1zM91 15h1v1h-1zM98 15h1v1h-1zM104 15h1v1h-1zM107 15h1v1h-1zM114 15h1v1h-1zM120 15h1v1h-1zM123 15h1v1h-1zM136 15h1v1h-1zM139 15h1v1h-1zM146 15h1v1h-1zM152 15h1v1h-1zM155 15h1v1h-1zM1 16h1v1h-1zM7 16h1v1h-1zM10 16h1v1h-1zM17 16h1v1h-1zM23 16h1v1h-1zM26 16h1v1h-1zM33 16h1v1h-1zM39 16h1v1h-1zM42 16h1v1h-1zM55 16h1v1h-1zM58 16h1v1h-1zM65 16h1v1h-1zM71 16h1v1h-1zM74 16h1v1h-1zM81 16h1v1h-1zM87 16h1v1h-1zM90 16h1v1h-1zM103 16h1v1h-1zM106 16h1v1h-1zM113 16h1v1h-1zM119 16h1v1h-1zM122 16h1v1h-1zM129 16h1v1h-1zM135 16h1v1h-1zM138 16h1v1h-1zM145 16h1v1h-1zM151 16h1v1h-1zM154 16h1v1h-1zM0 17h1v1h-1zM6 17h1v1h-1zM9 17h1v1h-1zM22 17h1v1h-1zM25 17h1v1h-1zM32 17h1v1h-1zM38 17h1v1h-1zM41 17h1v1h-1zM48 17h1v1h-1zM54 17h1v1h-1zM57 17h1v1h-1zM64 17h1v1h-1zM70 17h1v1h-1zM73 17h1v1h-1zM86 17h1v1h-1zM89 17h1v1h-1zM96 17h1v1h-1zM102 17h1v1h-1zM105 17h1v1h-1zM112 17h1v1h-1zM118 17h1v1h-1zM121 17h1v1h-1zM134 17h1v1h-1zM137 17h1v1h-1zM144 17h1v1h-1zM150 17h1v1h-1zM153 17h1v1h-1zM5 18h1v1h-1zM8 18h1v1h-1zM15 18h1v1h-1zM21 18h1v1h-1zM24 18h1v1h-1zM31 18h1v1h-1zM37 18h1v1h-1zM40 18h1v1h-1zM53 18h1v1h-1zM56 18h1v1h-1zM63 18h1v1h-1zM69 18h1v1h-1zM72 18h1v1h-1zM79 18h1v1h-1zM85 18h1v1h-1zM88 18h1v1h-1zM95 18h1v1h-1zM101 18h1v1h-1zM104 18h1v1h-1zM117 18h1v1h-1zM120 18h1v1h-1zM127 18h1v1h-1zM133 18h1v1h-1zM136 18h1v1h-1zM143 18h1v1h-1zM149 18h1v1h-1zM152 18h1v1h-1zM4 19h1v1h-1zM7 19h1v1h-1zM14 19h1v1h-1zM20 19h1v1h-1zM23 19h1v1h-1zM36 19h1v1h-1zM39 19h1v1h-1zM46 19h1v1h-1zM52 19h1v1h-1zM55 19h1v1h-1zM62 19h1v1h-1zM68 19h1v1h-1zM71 19h1v1h-1zM84 19h1v1h-1zM87 19h1v1h-1zM94 19h1v1h-1zM100 19h1v1h-1zM103 19h1v1h-1zM110 19h1v1h-1zM116 19h1v1h-1zM119 19h1v1h-1zM126 19h1v1h-1zM132 19h1v1h-1zM135 19h1v1h-1zM148 19h1v1h-1zM151 19h1v1h-1zM3 20h1v1h-1zM6 20h1v1h-1zM13 20h1v1h-1zM19 20h1v1h-1zM22 20h1v1h-1zM29 20h1v1h-1zM35 20h1v1h-1zM38 20h1v1h-1zM45 20h1v1h-1zM51 20h1v1h-1zM54 20h1v1h-1zM67 20h1v1h-1zM70 20h1v1h-1zM77 20h1v1h-1zM83 20h1v1h-1zM86 20h1v1h-1zM93 20h1v1h-1zM99 20h1v1h-1zM102 20h1v1h-1zM115 20h1v1h-1zM118 20h1v1h-1zM125 20h1v1h-1zM131 20h1v1h-1zM134 20h1v1h-1zM141 20h1v1h-1zM147 20h1v1h-1zM150 20h1v1h-1zM157 20h1v1h-1zM2 21h1v1h-1zM5 21h1v1h-1zM12 21h1v1h-1zM18 21h1v1h-1zM21 21h1v1h-1zM34 21h1v1h-1zM37 21h1v1h-1zM44 21h1v1h-1zM50 21h1v1h-1zM53 21h1v1h-1zM60 21h1v1h-1zM66 21h1v1h-1zM69 21h1v1h-1zM76 21h1v1h-1zM82 21h1v1h-1zM85 21h1v1h-1zM98 21h1v1h-1zM101 21h1v1h-1zM108 21h1v1h-1zM114 21h1v1h-1zM117 21h1v1h-1zM124 21h1v1h-1zM130 21h1v1h-1zM133 21h1v1h-1zM146 21h1v1h-1zM149 21h1v1h-1zM156 21h1v1h-1zM1 22h1v1h-1zM4 22h1v1h-1zM17 22h1v1h-1zM20 22h1v1h-1zM27 22h1v1h-1zM33 22h1v1h-1zM36 22h1v1h-1zM43 22h1v1h-1zM49 22h1v1h-1zM52 22h1v1h-1zM65 22h1v1h-1zM68 22h1v1h-1zM75 22h1v1h-1zM81 22h1v1h-1zM84 22h1v1h-1zM91 22h1v1h-1zM97 22h1v1h-1zM100 22h1v1h-1zM107 22h1v1h-1zM113 22h1v1h-1zM116 22h1v1h-1zM129 22h1v1h-1zM132 22h1v1h-1zM139 22h1v1h-1zM145 22h1v1h-1zM148 22h1v1h-1zM155 22h1v1h-1z" fill="#000"/></svg><div class="a t" style="left:776px;top:216.69px;font-size:11px;color:#eaeaea;font-weight:normal;">Concrete_zelezobeton</div><div class="a" style="left:579px;top:461px;width:320px;height:162px;border:2px solid #f2f2f2;border-right:none;background:#2d3035"><div class="a" style="left:0;top:0;width:320px;height:1px;background:#1f2124"></div><div class="a" style="left:0;top:0;width:1px;height:160px;background:#1f2124"></div><div class="a" style="left:0;top:157px;width:320px;height:1px;background:#1f2124"></div><div class="a" style="left:15px;top:17px;width:320px;height:1px;background:#45484c"></div><div class="a t" style="left:19px;top:3.69px;font-size:11px;color:#e6e6e6;font-weight:normal;">ID</div><div class="a t" style="left:82px;top:3.69px;font-size:11px;color:#e6e6e6;font-weight:normal;">10</div><div class="a" style="left:15px;top:35px;width:320px;height:1px;background:#45484c"></div><div class="a t" style="left:19px;top:21.69px;font-size:11px;color:#e6e6e6;font-weight:normal;">Tags</div><div class="a" style="left:15px;top:53px;width:320px;height:1px;background:#45484c"></div><div class="a t" style="left:19px;top:39.69px;font-size:11px;color:#e6e6e6;font-weight:normal;">Comments</div><div class="a" style="left:15px;top:71px;width:320px;height:1px;background:#45484c"></div><div class="a t" style="left:19px;top:57.69px;font-size:11px;color:#e6e6e6;font-weight:normal;">Description</div><div class="a" style="left:15px;top:89px;width:320px;height:1px;background:#45484c"></div><div class="a t" style="left:19px;top:75.69px;font-size:11px;color:#e6e6e6;font-weight:normal;">Layer</div><div class="a" style="left:15px;top:107px;width:320px;height:1px;background:#45484c"></div><div class="a t" style="left:19px;top:93.69px;font-size:11px;color:#e6e6e6;font-weight:normal;">Thickness</div><div class="a t" style="left:82px;top:93.69px;font-size:11px;color:#e6e6e6;font-weight:normal;">variable</div><div class="a" style="left:15px;top:1px;width:1px;height:107px;background:#45484c"></div><div class="a" style="left:77px;top:1px;width:1px;height:107px;background:#45484c"></div></div><div class="a" style="left:580px;top:634px;width:117px;height:21px;border:2px solid #e8e8e8;border-radius:3px"></div><div class="a t" style="left:587px;top:639.69px;font-size:11px;color:#f0f0f0;font-weight:normal;">Custom Properties...</div>
</body></html>
